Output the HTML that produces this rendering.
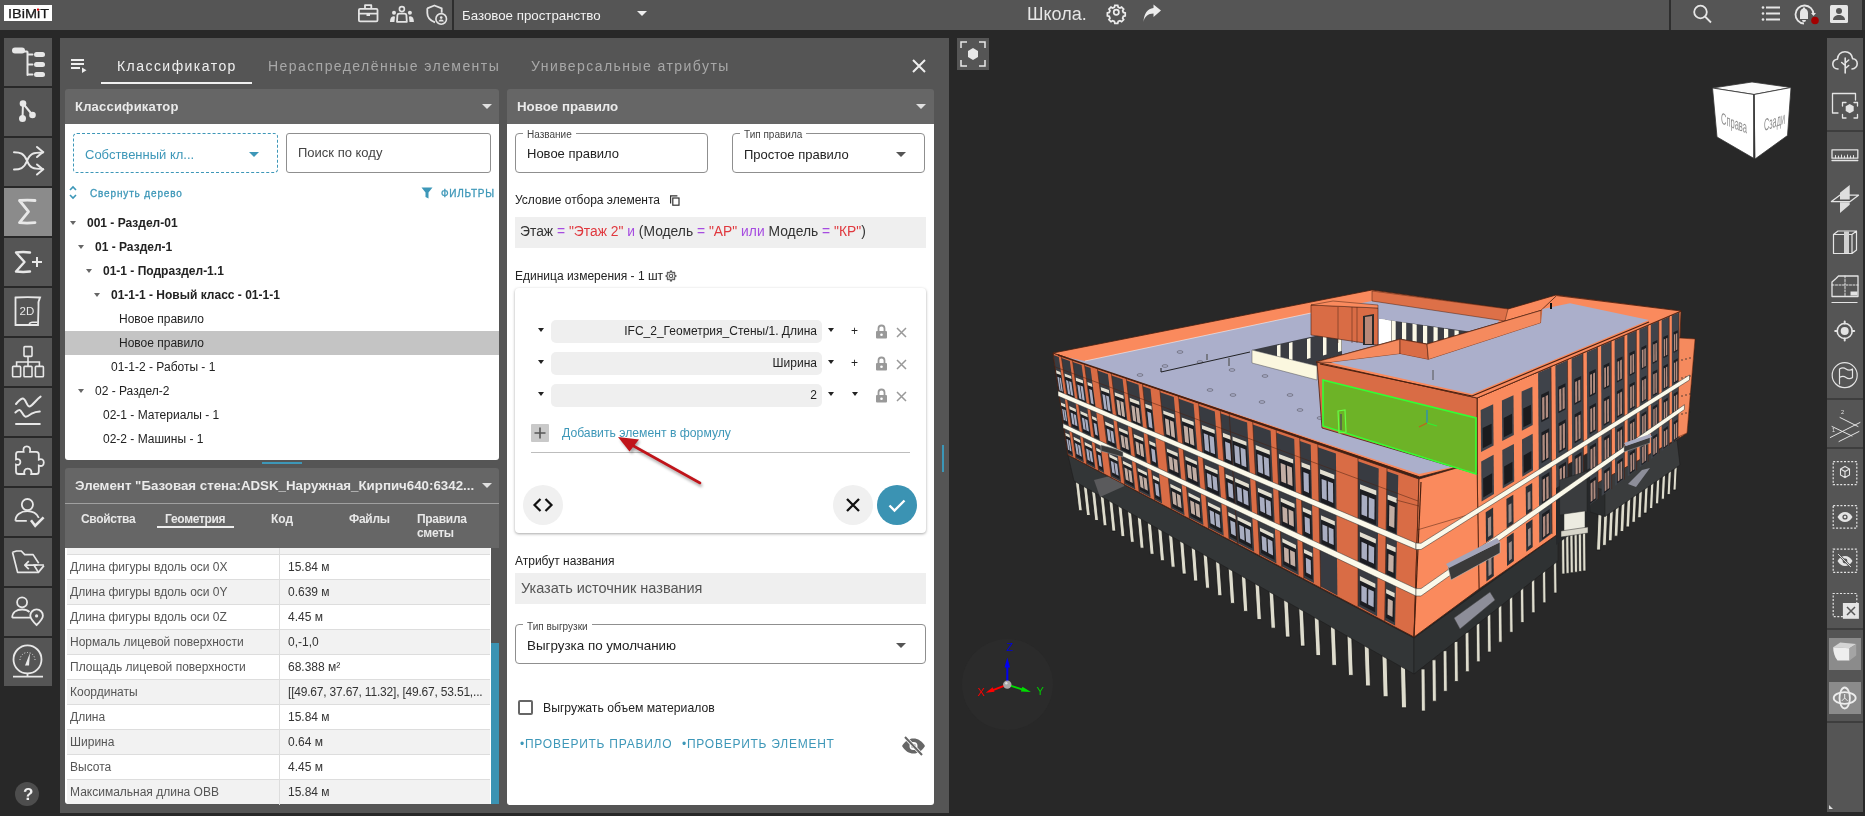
<!DOCTYPE html>
<html><head><meta charset="utf-8">
<style>
*{box-sizing:border-box;margin:0;padding:0}
html,body{width:1865px;height:816px;overflow:hidden;background:#282828;font-family:"Liberation Sans",sans-serif}
body{position:relative}
.t,.tr,.row span,.fr,svg{will-change:transform}
.a{position:absolute}
.t{position:absolute;white-space:nowrap;line-height:1}
.sb{position:absolute;left:4px;width:48px;height:48px;background:#555}
.sb.act{background:#8b8b8b}
.sb svg,.rb svg{position:absolute;left:0;top:0}
.tri{position:absolute;width:0;height:0;border-left:5px solid transparent;border-right:5px solid transparent;border-top:5px solid #e0e0e0}
.trid{position:absolute;width:0;height:0;border-left:5px solid transparent;border-right:5px solid transparent;border-top:5px solid #555}
.tt{position:absolute;width:0;height:0;border-left:3.5px solid transparent;border-right:3.5px solid transparent;border-top:4px solid #666}
.tr{position:absolute;font-size:12px;color:#222;white-space:nowrap;line-height:1}
.row{position:absolute;left:67px;width:422.5px;height:25px;border-top:1px solid #ddd;font-size:12px;color:#555}
.row span{position:absolute;top:6px;white-space:nowrap;line-height:1}
.row span.v{left:221px;color:#333}
.row span.k{left:3px}
.row i{position:absolute;left:212px;top:-1px;width:1px;height:26px;background:#ddd}
.g{background:#f2f2f2}
.fr{position:absolute;left:551px;width:271px;height:23px;background:#efefef;border-radius:5px;font-size:12px;color:#222;text-align:right;padding-right:5px;line-height:23px}
.blk{position:absolute;width:0;height:0;border-left:3.5px solid transparent;border-right:3.5px solid transparent;border-top:4px solid #222}
.rb{position:absolute;left:1829px;width:32px;height:32px}
</style></head><body>
<!-- TOP BAR -->
<div class="a" style="left:0;top:0;width:1865px;height:30px;background:#555"></div>
<div class="a" style="left:4px;top:5px;width:48px;height:16px;background:#fff"></div>
<svg class="a" style="left:4px;top:5px" width="48" height="16" viewBox="0 0 48 16"><text x="4" y="13.4" font-family="Liberation Sans" font-size="12.2" fill="#1a1a1a" textLength="41" lengthAdjust="spacingAndGlyphs" stroke="#1a1a1a" stroke-width="0.25">IBiMiT</text><rect x="33" y="3.6" width="2" height="2" fill="#e00000"/></svg>
<!-- top icons -->
<svg class="a" style="left:350px;top:0" width="110" height="30" viewBox="0 0 110 30">
 <g fill="none" stroke="#e4e4e4" stroke-width="1.8" stroke-linejoin="round">
  <rect x="8.9" y="8.8" width="18.6" height="12.6" rx="1.2"/>
  <path d="M15 8.8V5.2h6.3v3.6M8.9 13.7h18.6"/>
  <circle cx="51.9" cy="9.1" r="2.5" stroke-width="1.6"/>
  <path d="M47 21.8l.4-6.6c.1-1 1-1.6 2-1.6h5c1 0 1.9.6 2 1.6l.4 6.6z"/>
  <path d="M77.3 8.3l7.1-2.8 7.3 2.8v4.4M85 22.4c-4.5-1.8-7.7-5-7.7-9.5V8.3"/>
  <circle cx="91.2" cy="18.9" r="5.3" stroke-width="1.6"/>
 </g>
 <path d="M16.5 14v2h3.5v-2" fill="#e4e4e4"/>
 <g fill="#e4e4e4">
  <circle cx="44" cy="12.7" r="2"/><circle cx="59.9" cy="12.7" r="2"/>
  <path d="M40 22c0-3.5 1.2-5.8 3.5-5.8.8 0 1.4.3 1.5.6l-.6 5.2zM63.9 22c0-3.5-1.2-5.8-3.5-5.8-.8 0-1.4.3-1.5.6l.6 5.2z"/>
  <circle cx="91.2" cy="17.6" r="1.3"/><path d="M88.6 21.5c.3-1.4 1.3-2 2.6-2s2.3.6 2.6 2z"/>
 </g>
</svg>
<div class="a" style="left:452px;top:0;width:2px;height:30px;background:#2e2e2e"></div>
<div class="t" style="left:462px;top:9px;font-size:13.3px;color:#f2f2f2">Базовое пространство</div>
<div class="tri" style="left:637px;top:11px;border-left-width:5.5px;border-right-width:5.5px;border-top-width:5.5px;border-top-color:#eee"></div>
<div class="t" style="left:1027px;top:4.5px;font-size:18px;color:#e6e6e6">Школа.</div>
<svg class="a" style="left:1100px;top:0" width="70" height="30" viewBox="0 0 70 30">
 <g transform="translate(16.3 12.3) scale(0.72)">
  <path fill="none" stroke="#ececec" stroke-width="2.4" d="M-2 -9.5h4l.7 2.6 2.4 1 2.3-1.4 2.8 2.8-1.4 2.3 1 2.4 2.6.7v4l-2.6.7-1 2.4 1.4 2.3-2.8 2.8-2.3-1.4-2.4 1-.7 2.6h-4l-.7-2.6-2.4-1-2.3 1.4-2.8-2.8 1.4-2.3-1-2.4-2.6-.7v-4l2.6-.7 1-2.4-1.4-2.3 2.8-2.8 2.3 1.4 2.4-1z"/>
  <circle r="3.6" fill="none" stroke="#ececec" stroke-width="2.4"/>
 </g>
 <path fill="#ececec" d="M43.5 22c1-5.5 4.5-8.5 10-8.5V17l7.5-6.5-7.5-6v3.5C47.5 8.5 44 13.5 43.5 22z"/>
</svg>
<div class="a" style="left:1669px;top:0;width:2px;height:30px;background:#2e2e2e"></div>
<svg class="a" style="left:1690px;top:0" width="175" height="30" viewBox="0 0 175 30">
 <g fill="none" stroke="#e6e6e6" stroke-width="1.8">
  <circle cx="10.5" cy="12" r="6.3"/><path d="M15 16.5l6 6"/>
  <path d="M76 7.5h14M76 13.5h14M76 19.5h14"/>
  <path d="M114 23.5a9 9 0 1 1 9.5-9"/>
 </g>
 <g fill="#e6e6e6">
  <circle cx="73" cy="7.5" r="1.3"/><circle cx="73" cy="13.5" r="1.3"/><circle cx="73" cy="19.5" r="1.3"/>
  <path d="M110 19v-6c0-2.5 1.5-4 3-4.5v-1h2v1c1.5.5 3 2 3 4.5v6zM112 20h4a2 2 0 0 1-4 0z"/>
  <path d="M121 13h5l-2.5 3z"/>
  <rect x="140" y="5" width="18" height="18" rx="1.5"/>
 </g>
 <circle cx="125" cy="20.5" r="3.8" fill="#a30000"/>
 <g fill="#555"><circle cx="149" cy="11" r="3"/><path d="M143 20c0-3.5 3-5 6-5s6 1.5 6 5z"/></g>
</svg>
<div class="a" style="left:1862px;top:0;width:3px;height:30px;background:#2e2e2e"></div>

<!-- LEFT SIDEBAR -->
<div class="sb" style="top:38px"><svg width="48" height="48" viewBox="0 0 48 48"><g transform="translate(-4 0)"><g fill="none" stroke="#e8e8e8" stroke-width="2" stroke-linecap="round"><path d="M27.5 14v23M27.5 16.5h5M27.5 26.5h5M27.5 36.5h5"/></g><g fill="#e8e8e8"><rect x="12" y="9.5" width="13" height="6" rx="3"/><path d="M22 12.5h5.5v2H22z"/><rect x="34" y="14" width="11" height="5" rx="2.5"/><rect x="34" y="24" width="11" height="5" rx="2.5"/><rect x="34" y="34" width="11" height="5" rx="2.5"/></g></g></svg></div>
<div class="sb" style="top:88px"><svg width="48" height="48" viewBox="0 0 48 48"><g transform="translate(-4 0)"><path d="M23 15.5l-.5 15M23 15.5l9.5 11.5" stroke="#e8e8e8" stroke-width="2"/><g fill="#e8e8e8"><circle cx="23" cy="15.5" r="3.3"/><circle cx="22.5" cy="30.5" r="3.5"/><circle cx="32.5" cy="27" r="3.3"/></g></g></svg></div>
<div class="sb" style="top:138px"><svg width="48" height="48" viewBox="0 0 48 48"><g transform="translate(-4 0)"><g fill="none" stroke="#e8e8e8" stroke-width="2" stroke-linecap="round"><path d="M14 14.2c6 0 10 1 13 8.5s6 8.3 16 8.3"/><path d="M14 31.5c6 0 10-1 13-8.5s6-8.5 16-8.5"/><path d="M37 9l6 5-6 5M37 26.5l6 5-6 5"/></g></g></svg></div>
<div class="sb act" style="top:188px"><svg width="48" height="48" viewBox="0 0 48 48"><g transform="translate(-4 0)"><path d="M35 12.5c-5-.5-10-.5-15.5 0l9 11.2-9 11c5 .5 10 .5 15.5 0" fill="none" stroke="#e8e8e8" stroke-width="2.8" stroke-linecap="round" stroke-linejoin="round"/></g></svg></div>
<div class="sb" style="top:238px"><svg width="48" height="48" viewBox="0 0 48 48"><path d="M26 14.5c-4.5-.6-9-.6-14 0l8.5 9.5-8.5 9.5c5 .6 9.5.6 14 0" fill="none" stroke="#e8e8e8" stroke-width="2.4" stroke-linecap="round" stroke-linejoin="round"/><path d="M33 19v10M28 24h10" stroke="#e8e8e8" stroke-width="2"/></svg></div>
<div class="sb" style="top:288px"><svg width="48" height="48" viewBox="0 0 48 48"><path d="M11.5 9.5c8-.6 16-.6 24.5 0-1.5 3-2 6-1.5 9l-.5 18.5H11.5z" fill="none" stroke="#e8e8e8" stroke-width="1.8"/><path d="M25 36.5c.5-1.5 1.5-2.2 3-2.2h5.5" fill="none" stroke="#e8e8e8" stroke-width="1.6"/><text x="15.5" y="27.2" font-family="Liberation Sans" font-size="11.5" fill="#e8e8e8">2D</text></svg></div>
<div class="sb" style="top:338px"><svg width="48" height="48" viewBox="0 0 48 48"><g fill="none" stroke="#e8e8e8" stroke-width="1.6"><rect x="20" y="8.6" width="8" height="9.8" rx="0.8"/><rect x="8.6" y="28.4" width="8" height="10.4" rx="0.8"/><rect x="20" y="28.4" width="8" height="10.4" rx="0.8"/><rect x="31.4" y="28.4" width="8" height="10.4" rx="0.8"/><path d="M24 18.4v10M12.6 28.4V24h22.8v4.4"/></g></svg></div>
<div class="sb" style="top:388px"><svg width="48" height="48" viewBox="0 0 48 48"><g fill="none" stroke="#e8e8e8" stroke-width="2" stroke-linecap="round"><path d="M12 16c2.5-3 4.5-5 6.6-5.4 3-.5 4 7.5 6.6 7.8 3 .3 7-7 11.4-9.8"/><path d="M11.4 24.5c1.5-1.5 3-2.6 4.2-2.5 2 .2 3.5 6.5 6 6.7 2.2.2 4.5-2.2 6-3.1 2.5-1.3 5-2 8.2-2.1"/><path d="M12 35.9h23.8"/></g></svg></div>
<div class="sb" style="top:438px"><svg width="48" height="48" viewBox="0 0 48 48"><path d="M14 13.8h5.6c-.8-3.5.6-5.4 3.2-5.4s4 1.9 3.2 5.4h6.2c1.5 0 2.6 1.1 2.6 2.6v5.2c2.8-1 5-.2 5 3s-2.2 4-5 3v5.8c0 1.5-1.1 2.6-2.6 2.6h-5c.8-3-.4-5.4-3.4-5.4s-4.2 2.4-3.4 5.4H14.6c-1.5 0-2.6-1.1-2.6-2.6v-6.8c2.5.8 4.4-.2 4.4-2.6s-1.9-3.4-4.4-2.6v-5c0-1.5 1-2.6 2-2.6z" fill="none" stroke="#e8e8e8" stroke-width="1.8"/></svg></div>
<div class="sb" style="top:488px"><svg width="48" height="48" viewBox="0 0 48 48"><g fill="none" stroke="#e8e8e8" stroke-width="1.8"><circle cx="23.4" cy="16.6" r="5.6"/><path d="M11.4 32.8c0-6 5.5-9.6 12-9.6 5.5 0 9.5 2.5 11.4 6.6M11.4 32.8h11.4"/></g><path d="M27 32.3l4.2 5.4 8.4-8.4" fill="none" stroke="#e8e8e8" stroke-width="2.6"/></svg></div>
<div class="sb" style="top:538px"><svg width="48" height="48" viewBox="0 0 48 48"><g fill="none" stroke="#e8e8e8" stroke-width="1.7" stroke-linejoin="round"><path d="M8.5 14.2l4-1.2h4.8l3.4 3.6h8.4l5.6 8.6M8.5 14.2l5.1 20.2h20.8l5.5-6.8"/><path d="M33.5 27.2H21M24.8 23.2l-4 4 4 4"/><path d="M34.4 34.4l-4.5-7.4h10"/></g></svg></div>
<div class="sb" style="top:588px"><svg width="48" height="48" viewBox="0 0 48 48"><g fill="none" stroke="#e8e8e8" stroke-width="1.8"><circle cx="18.1" cy="14.3" r="5"/><path d="M8.2 29.7c0-5 4-8.2 10-8.2 3 0 5.5.8 7.3 2.5M8.2 29.7h18"/><path d="M32.6 37c-3.6-3.5-6.3-6.5-6.3-9.3a6.3 6.3 0 0 1 12.6 0c0 2.8-2.7 5.8-6.3 9.3z"/></g><circle cx="32.6" cy="27.9" r="1.6" fill="#e8e8e8"/></svg></div>
<div class="sb" style="top:638px"><svg width="48" height="48" viewBox="0 0 48 48"><g fill="none" stroke="#e8e8e8" stroke-width="1.8"><circle cx="23.5" cy="21.4" r="14"/><path d="M23.5 35.4v3.2M9 38.6h30"/></g><path d="M16 22a7.5 7.5 0 0 1 15 0" fill="none" stroke="#e8e8e8" stroke-width="1" stroke-dasharray="1 1.8"/><path d="M21 27.5l5-12.5-1 12.5z" fill="#e8e8e8"/></svg></div>
<div class="a" style="left:15px;top:782px;width:24px;height:24px;border-radius:50%;background:#4d4d4d"></div>
<div class="t" style="left:22.5px;top:785.5px;font-size:17px;font-weight:bold;color:#f0f0f0">?</div>


<!-- MAIN PANEL -->
<div class="a" style="left:60px;top:38px;width:889px;height:775px;background:#555"></div>
<!-- tab header -->
<svg class="a" style="left:68px;top:56px" width="22" height="20" viewBox="0 0 22 20">
 <path d="M3 4h13M3 8h13M3 12h9" stroke="#eee" stroke-width="1.8"/>
 <path d="M14 11.5v5.5l4.5-2.75z" fill="#eee"/>
</svg>
<div class="t" style="left:117px;top:59px;font-size:14px;color:#f0f0f0;letter-spacing:1.45px">Классификатор</div>
<div class="a" style="left:101px;top:82px;width:151px;height:2px;background:#f0f0f0"></div>
<div class="t" style="left:268px;top:59px;font-size:14px;color:#a8a8a8;letter-spacing:1.43px">Нераспределённые элементы</div>
<div class="t" style="left:531px;top:59px;font-size:14px;color:#a8a8a8;letter-spacing:1.44px">Универсальные атрибуты</div>
<svg class="a" style="left:910px;top:57px" width="18" height="18" viewBox="0 0 18 18"><path d="M3 3l12 12M15 3L3 15" stroke="#eee" stroke-width="2"/></svg>

<!-- CLASSIFIER PANEL -->
<div class="a" style="left:65px;top:89px;width:434px;height:35px;background:#666;border-radius:3px 3px 0 0"></div>
<div class="t" style="left:75px;top:100px;font-size:13px;font-weight:bold;color:#eaeaea;letter-spacing:0.2px">Классификатор</div>
<div class="tri" style="left:482px;top:104px"></div>
<div class="a" style="left:65px;top:124px;width:434px;height:336px;background:#fff;border-radius:0 0 3px 3px"></div>
<div class="a" style="left:73px;top:133px;width:205px;height:40px;border:1px dashed #3d97b8;border-radius:4px"></div>
<div class="t" style="left:85px;top:148px;font-size:13px;color:#3d97b8">Собственный кл...</div>
<div class="a" style="left:249px;top:152px;width:0;height:0;border-left:5px solid transparent;border-right:5px solid transparent;border-top:5px solid #3d97b8"></div>
<div class="a" style="left:286px;top:133px;width:205px;height:40px;border:1px solid #8f8f8f;border-radius:3px"></div>
<div class="t" style="left:298px;top:146px;font-size:13px;color:#444">Поиск по коду</div>
<svg class="a" style="left:66px;top:185px" width="14" height="16" viewBox="0 0 14 16"><path d="M4 5l3-3 3 3M4 10l3 3 3-3" fill="none" stroke="#3d97b8" stroke-width="1.6"/></svg>
<div class="t" style="left:90px;top:188.5px;font-size:10px;color:#3d97b8;letter-spacing:0.85px;-webkit-text-stroke:0.3px #3d97b8">Свернуть дерево</div>
<svg class="a" style="left:420px;top:186px" width="14" height="14" viewBox="0 0 14 14"><path d="M1.5 1.5h11l-4 5v6l-3-1.5v-4.5z" fill="#3d97b8"/></svg>
<div class="t" style="left:441px;top:188.5px;font-size:10px;color:#3d97b8;letter-spacing:0.75px;-webkit-text-stroke:0.3px #3d97b8">ФИЛЬТРЫ</div>
<!-- tree -->
<div class="a" style="left:65px;top:331px;width:434px;height:24px;background:#c4c4c4"></div>
<div class="tt" style="left:70px;top:221px"></div><div class="tr" style="left:87px;top:217px;font-weight:bold">001 - Раздел-01</div>
<div class="tt" style="left:78px;top:245px"></div><div class="tr" style="left:95px;top:241px;font-weight:bold">01 - Раздел-1</div>
<div class="tt" style="left:86px;top:269px"></div><div class="tr" style="left:103px;top:265px;font-weight:bold">01-1 - Подраздел-1.1</div>
<div class="tt" style="left:94px;top:293px"></div><div class="tr" style="left:111px;top:289px;font-weight:bold">01-1-1 - Новый класс - 01-1-1</div>
<div class="tr" style="left:119px;top:313px">Новое правило</div>
<div class="tr" style="left:119px;top:337px">Новое правило</div>
<div class="tr" style="left:111px;top:361px">01-1-2 - Работы - 1</div>
<div class="tt" style="left:78px;top:389px"></div><div class="tr" style="left:95px;top:385px">02 - Раздел-2</div>
<div class="tr" style="left:103px;top:409px">02-1 - Материалы - 1</div>
<div class="tr" style="left:103px;top:433px">02-2 - Машины - 1</div>
<div class="a" style="left:262px;top:462px;width:40px;height:2px;background:#3d97b8"></div>

<!-- ELEMENT PANEL -->
<div class="a" style="left:65px;top:468px;width:434px;height:80px;background:#666;border-radius:3px 3px 0 0"></div>
<div class="a" style="left:65px;top:503px;width:434px;height:1px;background:#a0a0a0"></div>
<div class="t" style="left:75px;top:479px;font-size:13.3px;font-weight:bold;color:#eaeaea">Элемент "Базовая стена:ADSK_Наружная_Кирпич640:6342...</div>
<div class="tri" style="left:482px;top:483px"></div>
<div class="t" style="left:81px;top:513px;font-size:12px;font-weight:bold;color:#e8e8e8;letter-spacing:-0.35px">Свойства</div>
<div class="t" style="left:165px;top:513px;font-size:12px;font-weight:bold;color:#e8e8e8;letter-spacing:-0.3px">Геометрия</div>
<div class="a" style="left:157px;top:526px;width:77px;height:2px;background:#eee"></div>
<div class="t" style="left:271px;top:513px;font-size:12px;font-weight:bold;color:#e8e8e8">Код</div>
<div class="t" style="left:349px;top:513px;font-size:12px;font-weight:bold;color:#e8e8e8;letter-spacing:-0.3px">Файлы</div>
<div class="t" style="left:417px;top:513px;font-size:12px;font-weight:bold;color:#e8e8e8;letter-spacing:-0.3px">Правила</div>
<div class="t" style="left:417px;top:527px;font-size:12px;font-weight:bold;color:#e8e8e8;letter-spacing:-0.3px">сметы</div>
<div class="a" style="left:65px;top:548px;width:434px;height:256px;background:#fff;overflow:hidden;border-radius:0 0 3px 3px">
</div>
<div class="row g" style="top:548px;height:7px;border-top:none"><i style="top:0;height:7px"></i></div>
<div class="row" style="top:554px"><span class="k">Длина фигуры вдоль оси 0X</span><i></i><span class="v">15.84 м</span></div>
<div class="row g" style="top:579px"><span class="k">Длина фигуры вдоль оси 0Y</span><i></i><span class="v">0.639 м</span></div>
<div class="row" style="top:604px"><span class="k">Длина фигуры вдоль оси 0Z</span><i></i><span class="v">4.45 м</span></div>
<div class="row g" style="top:629px"><span class="k">Нормаль лицевой поверхности</span><i></i><span class="v">0,-1,0</span></div>
<div class="row" style="top:654px"><span class="k">Площадь лицевой поверхности</span><i></i><span class="v">68.388 м²</span></div>
<div class="row g" style="top:679px"><span class="k">Координаты</span><i></i><span class="v" style="letter-spacing:-0.2px">[[49.67, 37.67, 11.32], [49.67, 53.51,...</span></div>
<div class="row" style="top:704px"><span class="k">Длина</span><i></i><span class="v">15.84 м</span></div>
<div class="row g" style="top:729px"><span class="k">Ширина</span><i></i><span class="v">0.64 м</span></div>
<div class="row" style="top:754px"><span class="k">Высота</span><i></i><span class="v">4.45 м</span></div>
<div class="row g" style="top:779px;height:25px"><span class="k">Максимальная длина OBB</span><i></i><span class="v">15.84 м</span></div>
<div class="a" style="left:491px;top:548px;width:8px;height:256px;background:#555"></div>
<div class="a" style="left:491px;top:643px;width:8px;height:161px;background:#3b93b3"></div>

<!-- MIDDLE PANEL -->
<div class="a" style="left:942px;top:445px;width:2px;height:27px;background:#3b97b8"></div>
<div class="a" style="left:507px;top:89px;width:427px;height:35px;background:#666;border-radius:3px 3px 0 0"></div>
<div class="t" style="left:517px;top:100px;font-size:13.3px;font-weight:bold;color:#eaeaea">Новое правило</div>
<div class="tri" style="left:916px;top:104px"></div>
<div class="a" style="left:507px;top:124px;width:427px;height:681px;background:#fff;border-radius:0 0 3px 3px"></div>
<!-- name field -->
<div class="a" style="left:515px;top:133px;width:193px;height:40px;border:1px solid #8f8f8f;border-radius:4px"></div>
<div class="t" style="left:523px;top:129.5px;font-size:10px;color:#444;background:#fff;padding:0 4px">Название</div>
<div class="t" style="left:527px;top:147px;font-size:13px;color:#222">Новое правило</div>
<!-- type -->
<div class="a" style="left:732px;top:133px;width:193px;height:40px;border:1px solid #8f8f8f;border-radius:4px"></div>
<div class="t" style="left:740px;top:129.5px;font-size:10px;color:#444;background:#fff;padding:0 4px">Тип правила</div>
<div class="t" style="left:744px;top:148px;font-size:13px;color:#222">Простое правило</div>
<div class="trid" style="left:896px;top:152px"></div>
<!-- condition -->
<div class="t" style="left:515px;top:194px;font-size:12px;color:#222">Условие отбора элемента</div>
<svg class="a" style="left:668px;top:193px" width="14" height="14" viewBox="0 0 14 14"><path d="M2.6 10.5V2.8h6.8" fill="none" stroke="#333" stroke-width="1.2"/><rect x="4.8" y="5" width="6.2" height="7.2" fill="none" stroke="#333" stroke-width="1.2"/></svg>
<div class="a" style="left:515px;top:217px;width:411px;height:31px;background:#efefef"></div>
<div class="t" style="left:520px;top:225px;font-size:13.85px;color:#333">Этаж <span style="color:#a64ce0">=</span> <span style="color:#e0383e">"Этаж 2"</span> <span style="color:#a64ce0">и</span> (Модель <span style="color:#a64ce0">=</span> <span style="color:#e0383e">"АР"</span> <span style="color:#a64ce0">или</span> Модель <span style="color:#a64ce0">=</span> <span style="color:#e0383e">"КР"</span>)</div>
<div class="t" style="left:515px;top:270px;font-size:12px;color:#222">Единица измерения - 1 шт</div>
<svg class="a" style="left:665px;top:270px" width="12" height="12" viewBox="0 0 12 12"><path d="M9.49 5.11 L10.86 5.41 L10.86 6.59 L9.49 6.89 L9.10 7.84 L9.85 9.03 L9.03 9.85 L7.84 9.10 L6.89 9.49 L6.59 10.86 L5.41 10.86 L5.11 9.49 L4.16 9.10 L2.97 9.85 L2.15 9.03 L2.90 7.84 L2.51 6.89 L1.14 6.59 L1.14 5.41 L2.51 5.11 L2.90 4.16 L2.15 2.97 L2.97 2.15 L4.16 2.90 L5.11 2.51 L5.41 1.14 L6.59 1.14 L6.89 2.51 L7.84 2.90 L9.03 2.15 L9.85 2.97 L9.10 4.16Z" fill="none" stroke="#555" stroke-width="1.1"/><circle cx="6" cy="6" r="1.7" fill="none" stroke="#555" stroke-width="1.1"/></svg>
<!-- formula card -->
<div class="a" style="left:515px;top:288px;width:411px;height:245px;background:#fff;border-radius:4px;box-shadow:0 1px 3px rgba(0,0,0,0.35)"></div>
<div class="blk" style="left:538px;top:328px"></div>
<div class="fr" style="top:320px">IFC_2_Геометрия_Стены/1. Длина</div>
<div class="blk" style="left:828px;top:328px"></div>
<div class="t" style="left:851px;top:325px;font-size:12px;color:#222">+</div>
<div class="blk" style="left:538px;top:360px"></div>
<div class="fr" style="top:352px">Ширина</div>
<div class="blk" style="left:828px;top:360px"></div>
<div class="t" style="left:851px;top:357px;font-size:12px;color:#222">+</div>
<div class="blk" style="left:538px;top:392px"></div>
<div class="fr" style="top:384px">2</div>
<div class="blk" style="left:828px;top:392px"></div>
<div class="blk" style="left:852px;top:392px"></div>
<svg class="a" style="left:870px;top:320px" width="45" height="90" viewBox="0 0 45 90">
 <g id="lk"><path d="M8.5 11V8.5a3 3 0 0 1 6 0V11" fill="none" stroke="#999" stroke-width="1.8"/><rect x="6" y="11" width="11" height="7.5" rx="1" fill="#999"/><circle cx="11.5" cy="14.7" r="1.3" fill="#fff"/>
 <path d="M27 8l9 9M36 8l-9 9" stroke="#999" stroke-width="1.5"/></g>
 <use href="#lk" y="32"/><use href="#lk" y="64"/>
</svg>
<div class="a" style="left:531px;top:424px;width:18px;height:18px;background:#c9c9c9;border-radius:1px"></div>
<svg class="a" style="left:531px;top:424px" width="18" height="18" viewBox="0 0 18 18"><path d="M9 3.5v11M3.5 9h11" stroke="#555" stroke-width="1.6"/></svg>
<div class="t" style="left:562px;top:427px;font-size:12.2px;color:#3d97b8">Добавить элемент в формулу</div>
<div class="a" style="left:531px;top:452px;width:379px;height:1px;background:#bdbdbd"></div>
<div class="a" style="left:523px;top:485px;width:40px;height:40px;border-radius:50%;background:#f0f0f0"></div>
<svg class="a" style="left:523px;top:485px" width="40" height="40" viewBox="0 0 40 40"><path d="M17.5 14l-6 6 6 6M22.5 14l6 6-6 6" fill="none" stroke="#111" stroke-width="2.2"/></svg>
<div class="a" style="left:833px;top:485px;width:40px;height:40px;border-radius:50%;background:#f0f0f0"></div>
<svg class="a" style="left:833px;top:485px" width="40" height="40" viewBox="0 0 40 40"><path d="M14 14l12 12M26 14l-12 12" stroke="#111" stroke-width="2.3"/></svg>
<div class="a" style="left:877px;top:485px;width:40px;height:40px;border-radius:50%;background:#3b93b3"></div>
<svg class="a" style="left:877px;top:485px" width="40" height="40" viewBox="0 0 40 40"><path d="M12.5 20.5l5 5 10-10" fill="none" stroke="#fff" stroke-width="2.4"/></svg>
<!-- arrow -->
<svg class="a" style="left:600px;top:425px" width="120" height="75" viewBox="0 0 120 75">
 <defs><filter id="sh" x="-20%" y="-20%" width="140%" height="140%"><feGaussianBlur stdDeviation="1.5"/></filter></defs>
 <g transform="translate(2 3)" opacity="0.35" filter="url(#sh)"><path d="M100 58L32 20" stroke="#000" stroke-width="3"/><path d="M18 12l20 1-8 13z" fill="#000"/></g>
 <path d="M100 58L30 19" stroke="#c0141a" stroke-width="2.6" stroke-linecap="round"/>
 <path d="M18 12l21 2.5-9.5 12z" fill="#c0141a"/>
</svg>
<!-- attribute -->
<div class="t" style="left:515px;top:555px;font-size:12px;color:#222">Атрибут названия</div>
<div class="a" style="left:515px;top:573px;width:411px;height:31px;background:#efefef"></div>
<div class="t" style="left:521px;top:581px;font-size:14.5px;color:#555">Указать источник названия</div>
<div class="a" style="left:515px;top:624px;width:411px;height:40px;border:1px solid #8f8f8f;border-radius:4px"></div>
<div class="t" style="left:523px;top:621.5px;font-size:10px;color:#444;background:#fff;padding:0 4px">Тип выгрузки</div>
<div class="t" style="left:527px;top:639px;font-size:13.4px;color:#222">Выгрузка по умолчанию</div>
<div class="trid" style="left:896px;top:643px"></div>
<div class="a" style="left:518px;top:700px;width:15px;height:15px;border:2px solid #666;border-radius:2px"></div>
<div class="t" style="left:543px;top:702px;font-size:12.2px;color:#222">Выгружать объем материалов</div>
<div class="t" style="left:520px;top:738px;font-size:12px;color:#3d97b8;letter-spacing:0.75px">•ПРОВЕРИТЬ ПРАВИЛО</div>
<div class="t" style="left:682px;top:738px;font-size:12px;color:#3d97b8;letter-spacing:0.75px">•ПРОВЕРИТЬ ЭЛЕМЕНТ</div>
<svg class="a" style="left:900px;top:734px" width="27" height="24" viewBox="0 0 27 24">
 <path d="M2 12c3-5 7-7.5 11.5-7.5S22 7 25 12c-3 5-7 7.5-11.5 7.5S5 17 2 12z" fill="#666"/>
 <circle cx="13.5" cy="12" r="4" fill="#fff"/><circle cx="13.5" cy="12" r="2.3" fill="#666"/>
 <path d="M5 3l17 18" stroke="#fff" stroke-width="3.5"/><path d="M5 3l17 18" stroke="#666" stroke-width="2"/>
</svg>


<!-- VIEWER -->
<div class="a" style="left:957px;top:38px;width:32px;height:32px;background:#555"></div>
<svg class="a" style="left:957px;top:38px" width="32" height="32" viewBox="0 0 32 32"><path d="M4 10V4h6M22 4h6v6M28 22v6h-6M10 28H4v-6" fill="none" stroke="#e8e8e8" stroke-width="1.5"/><path d="M16 10l5 3v6l-5 3-5-3v-6z" fill="#e8e8e8"/></svg>
<div class="a" style="left:961.5px;top:638.8px;width:91.6px;height:91.6px;border-radius:50%;background:#2b2b2b"></div>
<svg class="a" style="left:960px;top:638px" width="95" height="95" viewBox="0 0 95 95">
 <path d="M47.3 46.6V26" stroke="#0000f0" stroke-width="2"/><path d="M44.5 29.5l2.8-9.9 2.8 9.9z" fill="#0000f0"/>
 <text x="46.2" y="13.2" font-family="Liberation Sans" font-size="11" fill="#0000e0">Z</text>
 <path d="M47.3 46.6l-15 5.8" stroke="#f00" stroke-width="2"/><path d="M25.7 54.7l7-5.5 1.8 4.5z" fill="#f00"/>
 <text x="17.5" y="58" font-family="Liberation Sans" font-size="11" fill="#f00">X</text>
 <path d="M47.3 46.6l15.5 5" stroke="#0d0" stroke-width="2"/><path d="M70.9 54l-8.5-5.2-1.5 4.6z" fill="#0d0"/>
 <text x="76.5" y="56.5" font-family="Liberation Sans" font-size="11" fill="#0c0">Y</text>
 <circle cx="47.3" cy="46.6" r="4.2" fill="#a8a8a8"/><circle cx="46.3" cy="45.3" r="1.2" fill="#ddd"/>
</svg>
<!-- nav cube -->
<svg class="a" style="left:1700px;top:70px" width="110" height="100" viewBox="0 0 110 100">
 <path d="M12.5 18L52 12l39 5.5-37 7z" fill="#fafafa" stroke="#333" stroke-width="0.8"/>
 <path d="M12.5 18L54 24.5v64L17 67z" fill="#fff" stroke="#333" stroke-width="0.8"/>
 <path d="M54 24.5L91 17.5l-3.5 48L55 89z" fill="#fff" stroke="#333" stroke-width="0.8"/>
 <path d="M54 24.5V89" stroke="#333" stroke-width="1.4"/>
 <text x="0" y="0" font-family="Liberation Sans" font-size="16" fill="#8c8c8c" transform="matrix(0.47 0.18 0 1 21 53.5)">Справа</text>
 <text x="0" y="0" font-family="Liberation Sans" font-size="17" fill="#8c8c8c" transform="matrix(0.43 -0.15 0 1 64 61)">Сзади</text>
</svg>
<!--BLD--><svg class="a" style="left:0;top:0" width="1865" height="816" viewBox="0 0 1865 816"><polygon points="1075.2,479.7 1078.8,479.7 1082.3,510.7 1078.7,510.7" fill="#dedccd" stroke="#161616" stroke-width="0.8"/><polygon points="1083.2,484.3 1086.8,484.3 1090.3,515.5 1086.6,515.5" fill="#dedccd" stroke="#161616" stroke-width="0.8"/><polygon points="1091.4,489.0 1095.1,489.0 1098.5,520.5 1094.8,520.5" fill="#dedccd" stroke="#161616" stroke-width="0.8"/><polygon points="1100.0,493.8 1103.7,493.8 1107.0,525.7 1103.3,525.7" fill="#dedccd" stroke="#161616" stroke-width="0.8"/><polygon points="1108.8,498.9 1112.5,498.9 1115.8,531.1 1112.0,531.1" fill="#dedccd" stroke="#161616" stroke-width="0.8"/><polygon points="1117.9,504.1 1121.7,504.1 1124.9,536.6 1121.1,536.6" fill="#dedccd" stroke="#161616" stroke-width="0.8"/><polygon points="1127.4,509.4 1131.2,509.4 1134.3,542.3 1130.5,542.3" fill="#dedccd" stroke="#161616" stroke-width="0.8"/><polygon points="1137.1,515.0 1141.0,515.0 1144.0,548.2 1140.2,548.2" fill="#dedccd" stroke="#161616" stroke-width="0.8"/><polygon points="1147.2,520.8 1151.1,520.8 1154.1,554.3 1150.2,554.3" fill="#dedccd" stroke="#161616" stroke-width="0.8"/><polygon points="1157.6,526.7 1161.6,526.7 1164.5,560.7 1160.5,560.7" fill="#dedccd" stroke="#161616" stroke-width="0.8"/><polygon points="1168.4,532.9 1172.4,532.9 1175.2,567.2 1171.2,567.2" fill="#dedccd" stroke="#161616" stroke-width="0.8"/><polygon points="1179.6,539.2 1183.6,539.2 1186.3,574.0 1182.3,574.0" fill="#dedccd" stroke="#161616" stroke-width="0.8"/><polygon points="1191.1,545.8 1195.2,545.8 1197.8,581.0 1193.7,581.0" fill="#dedccd" stroke="#161616" stroke-width="0.8"/><polygon points="1203.0,552.6 1207.2,552.6 1209.7,588.2 1205.6,588.2" fill="#dedccd" stroke="#161616" stroke-width="0.8"/><polygon points="1215.4,559.6 1219.5,559.6 1222.0,595.7 1217.8,595.7" fill="#dedccd" stroke="#161616" stroke-width="0.8"/><polygon points="1228.1,566.9 1232.4,566.9 1234.7,603.4 1230.5,603.4" fill="#dedccd" stroke="#161616" stroke-width="0.8"/><polygon points="1241.3,574.4 1245.6,574.4 1247.8,611.4 1243.6,611.4" fill="#dedccd" stroke="#161616" stroke-width="0.8"/><polygon points="1254.9,582.2 1259.3,582.2 1261.4,619.6 1257.1,619.6" fill="#dedccd" stroke="#161616" stroke-width="0.8"/><polygon points="1269.0,590.2 1273.4,590.2 1275.5,628.2 1271.1,628.2" fill="#dedccd" stroke="#161616" stroke-width="0.8"/><polygon points="1283.6,598.5 1288.1,598.5 1290.0,637.0 1285.5,637.0" fill="#dedccd" stroke="#161616" stroke-width="0.8"/><polygon points="1298.7,607.1 1303.2,607.1 1305.0,646.1 1300.5,646.1" fill="#dedccd" stroke="#161616" stroke-width="0.8"/><polygon points="1314.2,616.0 1318.8,616.0 1320.6,655.6 1316.0,655.6" fill="#dedccd" stroke="#161616" stroke-width="0.8"/><polygon points="1330.4,625.2 1335.0,625.2 1336.6,665.4 1331.9,665.4" fill="#dedccd" stroke="#161616" stroke-width="0.8"/><polygon points="1347.0,634.7 1351.7,634.7 1353.2,675.4 1348.5,675.4" fill="#dedccd" stroke="#161616" stroke-width="0.8"/><polygon points="1364.2,644.5 1369.0,644.5 1370.4,685.9 1365.6,685.9" fill="#dedccd" stroke="#161616" stroke-width="0.8"/><polygon points="1382.0,654.7 1386.9,654.7 1388.1,696.7 1383.2,696.7" fill="#dedccd" stroke="#161616" stroke-width="0.8"/><polygon points="1400.5,665.2 1405.4,665.2 1406.5,707.8 1401.5,707.8" fill="#dedccd" stroke="#161616" stroke-width="0.8"/><polygon points="1421.1,669.0 1424.9,669.0 1425.3,711.0 1421.5,711.0" fill="#dedccd" stroke="#1c1c1c" stroke-width="0.7"/><polygon points="1432.1,659.8 1435.9,659.8 1436.3,701.2 1432.5,701.2" fill="#dedccd" stroke="#1c1c1c" stroke-width="0.7"/><polygon points="1443.2,650.7 1446.8,650.7 1447.2,691.3 1443.6,691.3" fill="#dedccd" stroke="#1c1c1c" stroke-width="0.7"/><polygon points="1454.2,641.5 1457.8,641.5 1458.2,681.5 1454.6,681.5" fill="#dedccd" stroke="#1c1c1c" stroke-width="0.7"/><polygon points="1465.2,632.3 1468.8,632.3 1469.2,671.7 1465.6,671.7" fill="#dedccd" stroke="#1c1c1c" stroke-width="0.7"/><polygon points="1476.3,623.2 1479.7,623.2 1480.1,661.8 1476.7,661.8" fill="#dedccd" stroke="#1c1c1c" stroke-width="0.7"/><polygon points="1487.3,614.0 1490.7,614.0 1491.1,652.0 1487.7,652.0" fill="#dedccd" stroke="#1c1c1c" stroke-width="0.7"/><polygon points="1498.3,604.8 1501.7,604.8 1502.1,642.2 1498.7,642.2" fill="#dedccd" stroke="#1c1c1c" stroke-width="0.7"/><polygon points="1509.4,595.7 1512.6,595.7 1513.0,632.3 1509.8,632.3" fill="#dedccd" stroke="#1c1c1c" stroke-width="0.7"/><polygon points="1520.4,586.5 1523.6,586.5 1524.0,622.5 1520.8,622.5" fill="#dedccd" stroke="#1c1c1c" stroke-width="0.7"/><polygon points="1531.4,577.3 1534.6,577.3 1535.0,612.7 1531.8,612.7" fill="#dedccd" stroke="#1c1c1c" stroke-width="0.7"/><polygon points="1542.5,568.2 1545.5,568.2 1545.9,602.8 1542.9,602.8" fill="#dedccd" stroke="#1c1c1c" stroke-width="0.7"/><polygon points="1553.5,559.0 1556.5,559.0 1556.9,593.0 1553.9,593.0" fill="#dedccd" stroke="#1c1c1c" stroke-width="0.7"/><polygon points="1561.5,534.0 1564.5,534.0 1564.9,574.0 1561.9,574.0" fill="#dedccd" stroke="#1c1c1c" stroke-width="0.7"/><polygon points="1565.7,533.4 1568.7,533.4 1569.1,573.4 1566.1,573.4" fill="#dedccd" stroke="#1c1c1c" stroke-width="0.7"/><polygon points="1569.9,532.8 1572.9,532.8 1573.3,572.8 1570.3,572.8" fill="#dedccd" stroke="#1c1c1c" stroke-width="0.7"/><polygon points="1574.1,532.2 1577.1,532.2 1577.5,572.2 1574.5,572.2" fill="#dedccd" stroke="#1c1c1c" stroke-width="0.7"/><polygon points="1578.3,531.6 1581.3,531.6 1581.7,571.6 1578.7,571.6" fill="#dedccd" stroke="#1c1c1c" stroke-width="0.7"/><polygon points="1582.5,531.0 1585.5,531.0 1585.9,571.0 1582.9,571.0" fill="#dedccd" stroke="#1c1c1c" stroke-width="0.7"/><polygon points="1598.1,514.0 1601.9,514.0 1600.4,550.0 1596.6,550.0" fill="#dedccd" stroke="#161616" stroke-width="0.8"/><polygon points="1604.0,509.8 1607.7,509.8 1606.2,545.4 1602.5,545.4" fill="#dedccd" stroke="#161616" stroke-width="0.8"/><polygon points="1609.9,505.7 1613.5,505.7 1612.0,540.8 1608.4,540.8" fill="#dedccd" stroke="#161616" stroke-width="0.8"/><polygon points="1615.7,501.5 1619.3,501.5 1617.8,536.2 1614.2,536.2" fill="#dedccd" stroke="#161616" stroke-width="0.8"/><polygon points="1621.6,497.4 1625.2,497.4 1623.7,531.5 1620.1,531.5" fill="#dedccd" stroke="#161616" stroke-width="0.8"/><polygon points="1627.5,493.2 1631.0,493.2 1629.5,526.9 1626.0,526.9" fill="#dedccd" stroke="#161616" stroke-width="0.8"/><polygon points="1633.4,489.1 1636.8,489.1 1635.3,522.3 1631.9,522.3" fill="#dedccd" stroke="#161616" stroke-width="0.8"/><polygon points="1639.2,484.9 1642.6,484.9 1641.1,517.7 1637.7,517.7" fill="#dedccd" stroke="#161616" stroke-width="0.8"/><polygon points="1645.1,480.8 1648.4,480.8 1646.9,513.1 1643.6,513.1" fill="#dedccd" stroke="#161616" stroke-width="0.8"/><polygon points="1651.0,476.6 1654.2,476.6 1652.7,508.5 1649.5,508.5" fill="#dedccd" stroke="#161616" stroke-width="0.8"/><polygon points="1656.9,472.5 1660.1,472.5 1658.6,503.8 1655.4,503.8" fill="#dedccd" stroke="#161616" stroke-width="0.8"/><polygon points="1662.7,468.3 1665.9,468.3 1664.4,499.2 1661.2,499.2" fill="#dedccd" stroke="#161616" stroke-width="0.8"/><polygon points="1668.6,464.2 1671.7,464.2 1670.2,494.6 1667.1,494.6" fill="#dedccd" stroke="#161616" stroke-width="0.8"/><polygon points="1674.5,460.0 1677.5,460.0 1676.0,490.0 1673.0,490.0" fill="#dedccd" stroke="#161616" stroke-width="0.8"/><polygon points="1068.0,455.0 1414.0,638.0 1414.0,674.0 1074.0,481.0" fill="#333637" stroke="#1e1e1e" stroke-width="0.6"/><polygon points="1414.0,638.0 1558.0,534.0 1558.0,561.0 1414.0,674.0" fill="#2f3233" stroke="#1e1e1e" stroke-width="0.6"/><polygon points="1588.0,486.0 1677.0,440.0 1680.0,465.0 1605.0,516.5" fill="#3a3c3d" stroke="#1e1e1e" stroke-width="0.6"/><polygon points="1588.0,486.0 1605.0,490.0 1605.0,516.5 1590.0,512.0" fill="#2a2c2d" stroke="#1e1e1e" stroke-width="0.5"/><polygon points="1094.0,480.0 1118.0,474.0 1124.5,486.0 1100.0,497.0" fill="#5a5a5c"/><polygon points="1053.0,353.0 1419.0,479.0 1414.0,637.0 1068.0,455.0" fill="#d96c45" stroke="#4a2010" stroke-width="0.8"/><polygon points="1053.3,355.1 1058.8,357.1 1073.2,456.8 1067.9,454.0" fill="#383b41"/><polyline points="1053.0,353.0 1068.0,455.0" stroke="#4a2010" stroke-width="0.6" fill="none"/><polygon points="1056.0,370.2 1060.4,371.9 1063.8,395.0 1059.4,393.2" fill="#1c1d21"/><polygon points="1056.0,370.2 1060.4,371.9 1060.9,375.1 1056.5,373.4" fill="#e2ded0"/><polygon points="1057.4,376.7 1058.9,377.3 1060.9,390.9 1059.4,390.3" fill="#a9aec2"/><polygon points="1059.4,377.5 1060.9,378.1 1062.9,391.7 1061.4,391.1" fill="#a9aec2"/><polygon points="1060.8,402.5 1065.1,404.3 1068.1,424.7 1063.8,422.7" fill="#1c1d21"/><polygon points="1060.8,402.5 1065.1,404.3 1065.6,407.4 1061.2,405.5" fill="#e2ded0"/><polygon points="1062.1,408.8 1063.6,409.4 1065.2,420.6 1063.7,419.9" fill="#a9aec2"/><polygon points="1064.1,409.6 1065.6,410.3 1067.2,421.5 1065.7,420.8" fill="#a9aec2"/><polygon points="1065.2,432.7 1069.5,434.8 1072.4,454.6 1068.1,452.4" fill="#1c1d21"/><polygon points="1065.2,432.7 1069.5,434.8 1070.0,437.8 1065.7,435.7" fill="#e2ded0"/><polygon points="1066.5,438.9 1068.0,439.6 1069.6,450.4 1068.1,449.7" fill="#a9aec2"/><polygon points="1068.5,439.8 1070.0,440.6 1071.5,451.4 1070.0,450.7" fill="#a9aec2"/><polygon points="1061.5,358.0 1069.8,360.9 1083.9,462.5 1075.9,458.2" fill="#383b41"/><polyline points="1061.2,355.8 1076.0,459.2" stroke="#4a2010" stroke-width="0.6" fill="none"/><polygon points="1064.5,373.4 1071.1,375.9 1074.4,399.4 1067.8,396.7" fill="#1c1d21"/><polygon points="1064.5,373.4 1071.1,375.9 1071.5,379.1 1064.9,376.6" fill="#e2ded0"/><polygon points="1066.0,380.1 1068.3,380.9 1070.3,394.8 1068.0,393.8" fill="#a9aec2"/><polygon points="1069.0,381.2 1071.3,382.1 1073.3,396.0 1070.9,395.0" fill="#a9aec2"/><polygon points="1069.2,406.1 1075.7,408.9 1078.6,429.7 1072.1,426.6" fill="#1c1d21"/><polygon points="1069.2,406.1 1075.7,408.9 1076.1,412.1 1069.6,409.2" fill="#e2ded0"/><polygon points="1070.7,412.6 1073.0,413.6 1074.6,424.9 1072.3,423.9" fill="#a9aec2"/><polygon points="1073.6,413.9 1075.9,414.9 1077.5,426.3 1075.2,425.2" fill="#a9aec2"/><polygon points="1073.5,436.7 1080.0,439.9 1082.8,460.0 1076.4,456.7" fill="#1c1d21"/><polygon points="1073.5,436.7 1080.0,439.9 1080.5,443.0 1074.0,439.8" fill="#e2ded0"/><polygon points="1075.0,443.1 1077.3,444.2 1078.8,455.2 1076.6,454.0" fill="#a9aec2"/><polygon points="1077.9,444.5 1080.2,445.7 1081.8,456.7 1079.5,455.5" fill="#a9aec2"/><polygon points="1072.7,361.9 1081.6,365.0 1095.4,468.5 1086.8,464.0" fill="#383b41"/><polyline points="1072.4,359.7 1086.9,464.9" stroke="#4a2010" stroke-width="0.6" fill="none"/><polygon points="1075.7,377.6 1082.8,380.3 1086.0,404.3 1078.9,401.3" fill="#1c1d21"/><polygon points="1075.7,377.6 1082.8,380.3 1083.2,383.6 1076.1,380.9" fill="#e2ded0"/><polygon points="1077.3,384.4 1079.7,385.4 1081.7,399.4 1079.2,398.4" fill="#a9aec2"/><polygon points="1080.4,385.6 1082.9,386.6 1084.8,400.7 1082.4,399.7" fill="#a9aec2"/><polygon points="1080.3,410.9 1087.3,413.9 1090.1,435.1 1083.1,431.8" fill="#1c1d21"/><polygon points="1080.3,410.9 1087.3,413.9 1087.7,417.2 1080.7,414.1" fill="#e2ded0"/><polygon points="1081.8,417.5 1084.3,418.6 1085.8,430.2 1083.4,429.0" fill="#a9aec2"/><polygon points="1085.0,418.9 1087.4,420.0 1089.0,431.6 1086.5,430.5" fill="#a9aec2"/><polygon points="1084.6,442.1 1091.5,445.5 1094.3,466.0 1087.4,462.4" fill="#1c1d21"/><polygon points="1084.6,442.1 1091.5,445.5 1092.0,448.6 1085.0,445.2" fill="#e2ded0"/><polygon points="1086.1,448.6 1088.5,449.8 1090.0,461.0 1087.6,459.7" fill="#a9aec2"/><polygon points="1089.2,450.1 1091.7,451.4 1093.2,462.6 1090.7,461.3" fill="#a9aec2"/><polygon points="1084.7,366.1 1090.5,368.1 1104.2,473.1 1098.5,470.1" fill="#383b41"/><polyline points="1084.4,363.8 1098.6,471.1" stroke="#4a2010" stroke-width="0.6" fill="none"/><polygon points="1087.4,382.0 1092.0,383.7 1095.2,408.1 1090.6,406.2" fill="#1c1d21"/><polygon points="1087.4,382.0 1092.0,383.7 1092.4,387.1 1087.8,385.3" fill="#e2ded0"/><polygon points="1089.2,389.0 1091.9,390.1 1093.8,404.4 1091.0,403.3" fill="#a9aec2"/><polygon points="1091.8,415.9 1096.4,417.9 1099.2,439.4 1094.7,437.2" fill="#1c1d21"/><polygon points="1091.8,415.9 1096.4,417.9 1096.9,421.2 1092.3,419.1" fill="#e2ded0"/><polygon points="1093.6,422.8 1096.4,424.0 1097.9,435.8 1095.2,434.5" fill="#a9aec2"/><polygon points="1096.1,447.7 1100.6,449.9 1103.3,470.7 1098.8,468.3" fill="#1c1d21"/><polygon points="1096.1,447.7 1100.6,449.9 1101.0,453.1 1096.5,450.8" fill="#e2ded0"/><polygon points="1097.8,454.4 1100.5,455.8 1102.0,467.1 1099.3,465.7" fill="#a9aec2"/><polygon points="1097.6,370.6 1107.9,374.2 1121.1,481.9 1111.1,476.7" fill="#383b41"/><polyline points="1097.3,368.3 1111.2,477.7" stroke="#4a2010" stroke-width="0.6" fill="none"/><polygon points="1100.7,387.0 1108.9,390.1 1111.9,415.1 1103.8,411.7" fill="#1c1d21"/><polygon points="1100.7,387.0 1108.9,390.1 1109.3,393.5 1101.1,390.4" fill="#e2ded0"/><polygon points="1102.3,394.1 1105.2,395.2 1107.0,409.9 1104.2,408.7" fill="#a9aec2"/><polygon points="1106.0,395.5 1108.9,396.6 1110.7,411.4 1107.8,410.2" fill="#a9aec2"/><polygon points="1105.0,421.6 1113.2,425.2 1115.9,447.2 1107.8,443.4" fill="#1c1d21"/><polygon points="1105.0,421.6 1113.2,425.2 1113.6,428.5 1105.5,424.9" fill="#e2ded0"/><polygon points="1106.7,428.6 1109.5,429.8 1111.0,441.8 1108.2,440.5" fill="#a9aec2"/><polygon points="1110.3,430.2 1113.2,431.4 1114.6,443.5 1111.8,442.2" fill="#a9aec2"/><polygon points="1109.1,454.1 1117.2,458.0 1119.8,479.3 1111.8,475.1" fill="#1c1d21"/><polygon points="1109.1,454.1 1117.2,458.0 1117.6,461.2 1109.5,457.3" fill="#e2ded0"/><polygon points="1110.7,460.8 1113.5,462.2 1115.0,473.8 1112.2,472.4" fill="#a9aec2"/><polygon points="1114.3,462.6 1117.2,464.0 1118.6,475.7 1115.8,474.3" fill="#a9aec2"/><polygon points="1111.6,375.4 1122.6,379.3 1135.3,489.4 1124.6,483.8" fill="#383b41"/><polyline points="1111.3,373.1 1124.7,484.8" stroke="#4a2010" stroke-width="0.6" fill="none"/><polygon points="1114.6,392.2 1123.4,395.5 1126.4,421.1 1117.6,417.5" fill="#1c1d21"/><polygon points="1114.6,392.2 1123.4,395.5 1123.8,399.1 1115.0,395.7" fill="#e2ded0"/><polygon points="1116.3,399.5 1119.4,400.7 1121.1,415.7 1118.1,414.4" fill="#c2aea4"/><polygon points="1120.3,401.0 1123.4,402.2 1125.1,417.3 1122.0,416.0" fill="#c2aea4"/><polygon points="1118.8,427.6 1127.6,431.4 1130.2,453.9 1121.5,449.8" fill="#1c1d21"/><polygon points="1118.8,427.6 1127.6,431.4 1128.0,434.8 1119.2,431.0" fill="#e2ded0"/><polygon points="1120.5,434.7 1123.5,436.1 1125.0,448.3 1122.0,446.9" fill="#c2aea4"/><polygon points="1124.4,436.4 1127.5,437.8 1128.9,450.1 1125.8,448.7" fill="#c2aea4"/><polygon points="1122.8,460.7 1131.4,464.9 1134.0,486.7 1125.4,482.2" fill="#1c1d21"/><polygon points="1122.8,460.7 1131.4,464.9 1131.8,468.2 1123.2,464.0" fill="#e2ded0"/><polygon points="1124.4,467.6 1127.4,469.1 1128.8,481.0 1125.8,479.4" fill="#c2aea4"/><polygon points="1128.3,469.6 1131.3,471.1 1132.7,483.0 1129.7,481.4" fill="#c2aea4"/><polygon points="1126.5,380.6 1138.5,384.8 1150.6,497.4 1139.1,491.4" fill="#383b41"/><polyline points="1126.3,378.2 1139.2,492.4" stroke="#4a2010" stroke-width="0.6" fill="none"/><polygon points="1129.6,397.8 1139.1,401.4 1141.9,427.6 1132.5,423.7" fill="#1c1d21"/><polygon points="1129.6,397.8 1139.1,401.4 1139.5,405.0 1130.0,401.4" fill="#e2ded0"/><polygon points="1131.3,405.3 1134.6,406.6 1136.3,421.9 1133.0,420.6" fill="#c2aea4"/><polygon points="1135.6,406.9 1138.9,408.2 1140.6,423.7 1137.3,422.3" fill="#c2aea4"/><polygon points="1133.7,434.0 1143.1,438.1 1145.5,461.1 1136.2,456.7" fill="#1c1d21"/><polygon points="1133.7,434.0 1143.1,438.1 1143.4,441.6 1134.1,437.5" fill="#e2ded0"/><polygon points="1135.4,441.3 1138.6,442.8 1140.0,455.3 1136.8,453.8" fill="#c2aea4"/><polygon points="1139.6,443.2 1142.9,444.6 1144.2,457.2 1140.9,455.7" fill="#c2aea4"/><polygon points="1137.5,467.9 1146.8,472.4 1149.2,494.6 1139.9,489.8" fill="#1c1d21"/><polygon points="1137.5,467.9 1146.8,472.4 1147.1,475.8 1137.9,471.2" fill="#e2ded0"/><polygon points="1139.1,475.0 1142.4,476.6 1143.7,488.7 1140.5,487.0" fill="#c2aea4"/><polygon points="1143.3,477.0 1146.6,478.6 1147.9,490.8 1144.6,489.1" fill="#c2aea4"/><polygon points="1142.7,386.3 1150.5,389.0 1162.1,503.5 1154.6,499.5" fill="#383b41"/><polyline points="1142.4,383.8 1154.7,500.6" stroke="#4a2010" stroke-width="0.6" fill="none"/><polygon points="1145.2,403.7 1151.5,406.0 1154.2,432.7 1148.0,430.1" fill="#1c1d21"/><polygon points="1145.2,403.7 1151.5,406.0 1151.8,409.7 1145.6,407.4" fill="#e2ded0"/><polygon points="1147.2,411.5 1151.0,412.9 1152.6,428.6 1148.9,427.1" fill="#a9aec2"/><polygon points="1149.1,440.7 1155.3,443.4 1157.7,466.8 1151.6,463.9" fill="#1c1d21"/><polygon points="1149.1,440.7 1155.3,443.4 1155.6,446.9 1149.5,444.3" fill="#e2ded0"/><polygon points="1151.1,448.3 1154.8,449.9 1156.1,462.7 1152.4,461.0" fill="#a9aec2"/><polygon points="1152.8,475.3 1158.8,478.3 1161.1,500.8 1155.1,497.7" fill="#1c1d21"/><polygon points="1152.8,475.3 1158.8,478.3 1159.2,481.7 1153.1,478.7" fill="#e2ded0"/><polygon points="1154.7,482.7 1158.3,484.5 1159.6,496.9 1156.0,495.0" fill="#a9aec2"/><polygon points="1160.0,392.3 1173.8,397.1 1184.5,515.2 1171.3,508.3" fill="#383b41"/><polyline points="1159.8,389.8 1171.4,509.4" stroke="#4a2010" stroke-width="0.6" fill="none"/><polygon points="1163.1,410.4 1174.1,414.5 1176.6,442.0 1165.7,437.5" fill="#1c1d21"/><polygon points="1163.1,410.4 1174.1,414.5 1174.4,418.3 1163.4,414.1" fill="#e2ded0"/><polygon points="1164.9,418.3 1168.7,419.8 1170.2,435.8 1166.4,434.3" fill="#c2aea4"/><polygon points="1169.8,420.2 1173.6,421.7 1175.1,437.9 1171.3,436.3" fill="#c2aea4"/><polygon points="1166.7,448.4 1177.6,453.1 1179.8,477.2 1169.0,472.1" fill="#1c1d21"/><polygon points="1166.7,448.4 1177.6,453.1 1177.9,456.7 1167.1,452.0" fill="#e2ded0"/><polygon points="1168.5,456.0 1172.3,457.7 1173.5,470.8 1169.8,469.1" fill="#c2aea4"/><polygon points="1173.3,458.2 1177.2,459.9 1178.4,473.1 1174.6,471.3" fill="#c2aea4"/><polygon points="1170.2,483.8 1180.9,489.0 1183.0,512.2 1172.4,506.7" fill="#1c1d21"/><polygon points="1170.2,483.8 1180.9,489.0 1181.2,492.5 1170.5,487.3" fill="#e2ded0"/><polygon points="1171.9,491.2 1175.6,493.1 1176.8,505.7 1173.1,503.8" fill="#c2aea4"/><polygon points="1176.7,493.6 1180.4,495.5 1181.6,508.2 1177.8,506.3" fill="#c2aea4"/><polygon points="1178.7,398.8 1193.6,404.0 1203.4,525.1 1189.2,517.7" fill="#383b41"/><polyline points="1178.5,396.2 1189.3,518.8" stroke="#4a2010" stroke-width="0.6" fill="none"/><polygon points="1181.7,417.4 1193.6,421.8 1195.9,450.1 1184.2,445.2" fill="#1c1d21"/><polygon points="1181.7,417.4 1193.6,421.8 1193.9,425.7 1182.1,421.2" fill="#e2ded0"/><polygon points="1183.6,425.5 1187.7,427.1 1189.1,443.6 1185.0,441.9" fill="#c2aea4"/><polygon points="1188.8,427.6 1193.0,429.2 1194.4,445.8 1190.2,444.1" fill="#c2aea4"/><polygon points="1185.2,456.3 1196.8,461.4 1198.8,486.1 1187.3,480.7" fill="#1c1d21"/><polygon points="1185.2,456.3 1196.8,461.4 1197.1,465.1 1185.5,460.0" fill="#e2ded0"/><polygon points="1186.9,464.2 1191.0,466.0 1192.1,479.5 1188.1,477.6" fill="#c2aea4"/><polygon points="1192.1,466.5 1196.2,468.3 1197.4,481.9 1193.3,480.0" fill="#c2aea4"/><polygon points="1188.3,492.6 1199.8,498.2 1201.8,522.0 1190.4,516.1" fill="#1c1d21"/><polygon points="1188.3,492.6 1199.8,498.2 1200.1,501.8 1188.6,496.2" fill="#e2ded0"/><polygon points="1190.1,500.3 1194.1,502.3 1195.2,515.2 1191.2,513.2" fill="#c2aea4"/><polygon points="1195.2,502.8 1199.3,504.8 1200.3,517.9 1196.3,515.8" fill="#c2aea4"/><polygon points="1198.8,405.8 1214.8,411.4 1223.7,535.7 1208.4,527.7" fill="#383b41"/><polyline points="1198.6,403.1 1208.5,528.9" stroke="#4a2010" stroke-width="0.6" fill="none"/><polygon points="1201.8,424.9 1214.6,429.7 1216.6,458.7 1204.1,453.5" fill="#1c1d21"/><polygon points="1201.8,424.9 1214.6,429.7 1214.8,433.7 1202.1,428.9" fill="#e2ded0"/><polygon points="1203.7,433.3 1208.1,435.0 1209.4,451.9 1205.0,450.1" fill="#a9aec2"/><polygon points="1209.4,435.5 1213.8,437.2 1215.1,454.3 1210.6,452.5" fill="#a9aec2"/><polygon points="1204.9,464.9 1217.5,470.3 1219.3,495.7 1206.9,489.9" fill="#1c1d21"/><polygon points="1204.9,464.9 1217.5,470.3 1217.7,474.2 1205.2,468.7" fill="#e2ded0"/><polygon points="1206.8,473.0 1211.1,474.9 1212.1,488.7 1207.8,486.7" fill="#a9aec2"/><polygon points="1212.3,475.5 1216.7,477.5 1217.8,491.3 1213.4,489.3" fill="#a9aec2"/><polygon points="1207.8,502.1 1220.2,508.1 1221.9,532.5 1209.7,526.1" fill="#1c1d21"/><polygon points="1207.8,502.1 1220.2,508.1 1220.4,511.8 1208.1,505.8" fill="#e2ded0"/><polygon points="1209.6,510.0 1213.9,512.1 1214.9,525.4 1210.6,523.2" fill="#a9aec2"/><polygon points="1215.1,512.7 1219.5,514.9 1220.4,528.2 1216.1,526.0" fill="#a9aec2"/><polygon points="1220.5,413.3 1231.0,417.0 1238.9,543.7 1229.0,538.5" fill="#383b41"/><polyline points="1220.3,410.6 1229.1,539.7" stroke="#4a2010" stroke-width="0.6" fill="none"/><polygon points="1222.8,432.8 1231.1,435.9 1233.0,465.5 1224.8,462.1" fill="#1c1d21"/><polygon points="1222.8,432.8 1231.1,435.9 1231.4,440.0 1223.1,436.9" fill="#e2ded0"/><polygon points="1225.0,441.5 1230.0,443.5 1231.1,460.9 1226.1,458.8" fill="#a9aec2"/><polygon points="1225.6,473.9 1233.8,477.4 1235.4,503.3 1227.3,499.5" fill="#1c1d21"/><polygon points="1225.6,473.9 1233.8,477.4 1234.0,481.3 1225.8,477.7" fill="#e2ded0"/><polygon points="1227.7,482.3 1232.6,484.5 1233.5,498.7 1228.7,496.4" fill="#a9aec2"/><polygon points="1228.2,512.0 1236.2,515.9 1237.8,540.8 1229.8,536.6" fill="#1c1d21"/><polygon points="1228.2,512.0 1236.2,515.9 1236.4,519.7 1228.4,515.7" fill="#e2ded0"/><polygon points="1230.2,520.2 1235.1,522.6 1235.9,536.2 1231.2,533.8" fill="#a9aec2"/><polygon points="1229.4,416.5 1247.1,422.6 1254.2,551.7 1237.5,543.0" fill="#383b41"/><polyline points="1229.2,413.7 1237.6,544.2" stroke="#4a2010" stroke-width="0.6" fill="none"/><polygon points="1232.4,436.4 1246.4,441.7 1248.1,471.8 1234.2,466.1" fill="#1c1d21"/><polygon points="1232.4,436.4 1246.4,441.7 1246.6,445.8 1232.6,440.5" fill="#e2ded0"/><polygon points="1234.2,445.1 1239.1,447.0 1240.2,464.6 1235.3,462.6" fill="#a9aec2"/><polygon points="1240.5,447.5 1245.4,449.4 1246.4,467.2 1241.5,465.2" fill="#a9aec2"/><polygon points="1235.0,477.9 1248.8,483.9 1250.2,510.2 1236.6,503.8" fill="#1c1d21"/><polygon points="1235.0,477.9 1248.8,483.9 1249.0,487.9 1235.2,481.9" fill="#e2ded0"/><polygon points="1236.8,486.4 1241.6,488.5 1242.4,502.8 1237.7,500.6" fill="#a9aec2"/><polygon points="1243.0,489.1 1247.8,491.3 1248.6,505.7 1243.8,503.4" fill="#a9aec2"/><polygon points="1237.4,516.5 1251.0,523.1 1252.4,548.4 1239.0,541.4" fill="#1c1d21"/><polygon points="1237.4,516.5 1251.0,523.1 1251.2,526.9 1237.6,520.3" fill="#e2ded0"/><polygon points="1239.2,524.7 1243.9,527.0 1244.7,540.8 1240.1,538.4" fill="#a9aec2"/><polygon points="1245.2,527.7 1250.0,530.1 1250.8,543.9 1246.1,541.5" fill="#a9aec2"/><polygon points="1252.8,424.6 1270.6,430.8 1276.4,563.4 1259.6,554.6" fill="#383b41"/><polyline points="1252.7,421.7 1259.7,555.8" stroke="#4a2010" stroke-width="0.6" fill="none"/><polygon points="1255.6,445.1 1269.7,450.4 1271.1,481.4 1257.2,475.6" fill="#1c1d21"/><polygon points="1255.6,445.1 1269.7,450.4 1269.9,454.7 1255.8,449.3" fill="#e2ded0"/><polygon points="1257.4,454.1 1262.3,456.0 1263.2,474.1 1258.3,472.1" fill="#a9aec2"/><polygon points="1263.7,456.5 1268.7,458.4 1269.5,476.7 1264.6,474.6" fill="#a9aec2"/><polygon points="1257.8,487.8 1271.7,493.8 1272.9,520.8 1259.2,514.4" fill="#1c1d21"/><polygon points="1257.8,487.8 1271.7,493.8 1271.8,497.9 1258.0,491.9" fill="#e2ded0"/><polygon points="1259.6,496.5 1264.4,498.6 1265.1,513.3 1260.3,511.1" fill="#a9aec2"/><polygon points="1265.7,499.2 1270.6,501.4 1271.3,516.2 1266.4,513.9" fill="#a9aec2"/><polygon points="1259.8,527.4 1273.4,534.0 1274.6,559.9 1261.1,552.9" fill="#1c1d21"/><polygon points="1259.8,527.4 1273.4,534.0 1273.6,538.0 1260.0,531.3" fill="#e2ded0"/><polygon points="1261.6,535.8 1266.3,538.1 1267.0,552.2 1262.3,549.8" fill="#a9aec2"/><polygon points="1267.6,538.8 1272.4,541.2 1273.1,555.4 1268.3,552.9" fill="#a9aec2"/><polygon points="1276.3,432.8 1294.2,439.0 1298.6,575.0 1281.7,566.2" fill="#383b41"/><polyline points="1276.2,429.8 1281.8,567.4" stroke="#4a2010" stroke-width="0.6" fill="none"/><polygon points="1278.9,453.9 1293.1,459.2 1294.1,491.0 1280.1,485.2" fill="#1c1d21"/><polygon points="1278.9,453.9 1293.1,459.2 1293.2,463.6 1279.0,458.2" fill="#e2ded0"/><polygon points="1280.6,463.0 1285.5,464.9 1286.2,483.5 1281.3,481.5" fill="#c2aea4"/><polygon points="1286.9,465.5 1291.9,467.4 1292.6,486.2 1287.6,484.1" fill="#c2aea4"/><polygon points="1280.6,497.7 1294.5,503.7 1295.4,531.4 1281.7,525.0" fill="#1c1d21"/><polygon points="1280.6,497.7 1294.5,503.7 1294.7,507.9 1280.8,501.8" fill="#e2ded0"/><polygon points="1282.3,506.6 1287.1,508.7 1287.7,523.8 1282.9,521.6" fill="#c2aea4"/><polygon points="1288.5,509.3 1293.4,511.5 1293.9,526.7 1289.0,524.4" fill="#c2aea4"/><polygon points="1282.2,538.3 1295.9,545.0 1296.8,571.5 1283.3,564.5" fill="#1c1d21"/><polygon points="1282.2,538.3 1295.9,545.0 1296.0,549.0 1282.4,542.3" fill="#e2ded0"/><polygon points="1283.9,546.9 1288.6,549.3 1289.1,563.7 1284.4,561.3" fill="#c2aea4"/><polygon points="1290.0,549.9 1294.8,552.3 1295.3,566.8 1290.5,564.4" fill="#c2aea4"/><polygon points="1299.8,441.0 1310.7,444.7 1313.9,583.1 1303.8,577.7" fill="#383b41"/><polyline points="1299.7,437.9 1303.8,579.0" stroke="#4a2010" stroke-width="0.6" fill="none"/><polygon points="1301.4,462.3 1310.1,465.6 1310.9,498.0 1302.4,494.5" fill="#1c1d21"/><polygon points="1301.4,462.3 1310.1,465.6 1310.2,470.1 1301.6,466.8" fill="#e2ded0"/><polygon points="1303.4,471.9 1308.6,473.9 1309.0,492.9 1303.9,490.8" fill="#a9aec2"/><polygon points="1302.7,507.3 1311.2,510.9 1311.9,539.1 1303.5,535.2" fill="#1c1d21"/><polygon points="1302.7,507.3 1311.2,510.9 1311.3,515.2 1302.9,511.5" fill="#e2ded0"/><polygon points="1304.6,516.5 1309.7,518.7 1310.1,534.2 1305.1,531.8" fill="#a9aec2"/><polygon points="1303.9,548.9 1312.2,552.9 1312.8,579.9 1304.7,575.6" fill="#1c1d21"/><polygon points="1303.9,548.9 1312.2,552.9 1312.3,557.0 1304.0,552.9" fill="#e2ded0"/><polygon points="1305.8,557.8 1310.7,560.2 1311.1,575.0 1306.2,572.5" fill="#a9aec2"/><polygon points="1317.9,447.3 1335.9,453.5 1337.4,595.4 1320.6,586.6" fill="#383b41"/><polyline points="1317.8,444.2 1320.7,587.9" stroke="#4a2010" stroke-width="0.6" fill="none"/><polygon points="1320.0,469.3 1334.3,474.7 1334.7,507.9 1320.7,502.1" fill="#1c1d21"/><polygon points="1320.0,469.3 1334.3,474.7 1334.3,479.3 1320.1,473.8" fill="#e2ded0"/><polygon points="1321.6,478.9 1326.5,480.8 1326.8,500.2 1322.0,498.2" fill="#a9aec2"/><polygon points="1327.9,481.3 1333.0,483.3 1333.2,502.9 1328.2,500.8" fill="#a9aec2"/><polygon points="1320.9,515.2 1334.8,521.2 1335.2,550.1 1321.5,543.6" fill="#1c1d21"/><polygon points="1320.9,515.2 1334.8,521.2 1334.9,525.6 1321.0,519.5" fill="#e2ded0"/><polygon points="1322.4,524.4 1327.3,526.5 1327.5,542.3 1322.7,540.0" fill="#a9aec2"/><polygon points="1328.6,527.2 1333.5,529.3 1333.7,545.1 1328.9,542.9" fill="#a9aec2"/><polygon points="1358.0,461.2 1378.7,468.4 1377.1,616.2 1358.0,606.1" fill="#383b41"/><polyline points="1358.0,458.0 1358.0,607.5" stroke="#4a2010" stroke-width="0.6" fill="none"/><polygon points="1360.0,484.3 1376.3,490.4 1376.0,525.1 1360.0,518.5" fill="#1c1d21"/><polygon points="1360.0,484.3 1376.3,490.4 1376.3,495.2 1360.0,489.0" fill="#e2ded0"/><polygon points="1361.6,494.4 1367.2,496.5 1367.1,516.8 1361.5,514.5" fill="#a9aec2"/><polygon points="1368.8,497.2 1374.6,499.4 1374.4,519.8 1368.7,517.5" fill="#a9aec2"/><polygon points="1359.9,532.1 1375.9,539.0 1375.6,569.0 1359.9,561.7" fill="#1c1d21"/><polygon points="1359.9,532.1 1375.9,539.0 1375.8,543.5 1359.9,536.6" fill="#e2ded0"/><polygon points="1361.5,541.7 1367.0,544.2 1366.9,560.5 1361.5,558.0" fill="#a9aec2"/><polygon points="1368.6,544.9 1374.2,547.4 1374.0,563.8 1368.5,561.3" fill="#a9aec2"/><polygon points="1359.9,576.1 1375.4,583.7 1375.1,612.3 1359.8,604.4" fill="#1c1d21"/><polygon points="1359.9,576.1 1375.4,583.7 1375.4,588.0 1359.9,580.4" fill="#e2ded0"/><polygon points="1361.4,585.4 1366.8,588.1 1366.7,603.7 1361.4,600.9" fill="#a9aec2"/><polygon points="1368.3,588.9 1373.8,591.6 1373.6,607.3 1368.2,604.5" fill="#a9aec2"/><polygon points="1386.9,471.3 1398.3,475.3 1395.1,625.6 1384.7,620.1" fill="#383b41"/><polyline points="1387.0,468.0 1384.7,621.6" stroke="#4a2010" stroke-width="0.6" fill="none"/><polygon points="1387.7,494.7 1396.7,498.1 1396.0,533.5 1387.1,529.8" fill="#1c1d21"/><polygon points="1387.7,494.7 1396.7,498.1 1396.6,503.0 1387.6,499.6" fill="#e2ded0"/><polygon points="1389.3,505.1 1394.7,507.2 1394.3,528.0 1389.0,525.8" fill="#c2aea4"/><polygon points="1386.9,543.8 1395.7,547.6 1395.0,578.2 1386.4,574.1" fill="#1c1d21"/><polygon points="1386.9,543.8 1395.7,547.6 1395.6,552.2 1386.8,548.4" fill="#e2ded0"/><polygon points="1388.5,553.7 1393.7,556.1 1393.4,572.8 1388.2,570.4" fill="#c2aea4"/><polygon points="1386.2,588.9 1394.7,593.1 1394.1,622.2 1385.8,617.8" fill="#1c1d21"/><polygon points="1386.2,588.9 1394.7,593.1 1394.6,597.5 1386.1,593.3" fill="#e2ded0"/><polygon points="1387.8,598.5 1392.8,601.1 1392.5,617.0 1387.5,614.4" fill="#c2aea4"/><line x1="1055.0" y1="366.9" x2="1418.3" y2="501.1" stroke="#4a2010" stroke-width="0.5"/><polygon points="1477.0,462.0 1477.0,398.0 1681.0,311.0 1680.0,338.0 1695.0,339.0 1687.0,433.0 1681.0,437.0 1590.0,487.0 1590.0,452.0 1558.0,470.0 1558.0,534.0 1479.0,589.0" fill="#fa8a5d" stroke="#4a2010" stroke-width="0.8"/><polygon points="1480.7,409.9 1493.2,404.3 1493.6,445.5 1481.1,451.9" fill="#3f434a"/><polygon points="1482.6,428.0 1491.6,423.7 1491.8,443.5 1482.8,448.2" fill="#1a1b1e"/><polygon points="1481.2,461.5 1493.6,454.8 1494.0,493.9 1481.6,501.4" fill="#3f434a"/><polygon points="1483.1,478.5 1492.1,473.3 1492.3,492.1 1483.3,497.5" fill="#1a1b1e"/><polygon points="1485.7,512.2 1493.1,507.5 1493.4,537.2 1486.0,542.3" fill="#2f3035"/><polygon points="1487.9,518.3 1491.1,516.3 1491.2,534.9 1488.1,537.1" fill="#9c8c88"/><polygon points="1486.1,551.6 1493.5,546.5 1493.8,576.0 1486.4,581.6" fill="#2f3035"/><polygon points="1488.3,557.6 1491.4,555.4 1491.6,573.9 1488.5,576.3" fill="#9c8c88"/><polygon points="1501.9,400.4 1513.5,395.2 1513.8,434.9 1502.2,440.9" fill="#3f434a"/><polygon points="1503.7,417.9 1512.0,413.8 1512.2,433.0 1503.8,437.3" fill="#1a1b1e"/><polygon points="1502.3,450.1 1513.9,443.9 1514.2,481.6 1502.7,488.6" fill="#3f434a"/><polygon points="1504.1,466.5 1512.5,461.8 1512.6,479.9 1504.3,484.9" fill="#1a1b1e"/><polygon points="1506.4,499.1 1513.3,494.8 1513.6,523.4 1506.7,528.2" fill="#2f3035"/><polygon points="1508.5,505.1 1511.4,503.2 1511.6,521.2 1508.6,523.2" fill="#9c8c88"/><polygon points="1506.8,537.2 1513.7,532.4 1513.9,560.9 1507.0,566.1" fill="#2f3035"/><polygon points="1508.8,543.0 1511.8,540.9 1511.9,558.8 1509.0,561.0" fill="#9c8c88"/><polygon points="1521.6,391.5 1532.4,386.7 1532.7,425.1 1521.9,430.7" fill="#3f434a"/><polygon points="1523.2,408.4 1531.0,404.7 1531.2,423.2 1523.4,427.2" fill="#1a1b1e"/><polygon points="1522.0,439.6 1532.7,433.8 1533.0,470.2 1522.3,476.7" fill="#3f434a"/><polygon points="1523.6,455.4 1531.4,451.0 1531.5,468.5 1523.8,473.2" fill="#1a1b1e"/><polygon points="1525.7,487.0 1532.2,482.9 1532.4,510.6 1526.0,515.0" fill="#2f3035"/><polygon points="1527.7,492.8 1530.4,491.0 1530.6,508.4 1527.8,510.3" fill="#9c8c88"/><polygon points="1526.0,523.8 1532.5,519.3 1532.7,546.9 1526.3,551.7" fill="#2f3035"/><polygon points="1528.0,529.4 1530.7,527.5 1530.8,544.8 1528.1,546.8" fill="#9c8c88"/><polygon points="1538.1,372.8 1551.0,367.3 1552.1,533.2 1539.3,542.7" fill="#3f434a"/><polyline points="1551.0,366.4 1552.1,534.0" stroke="#4a2010" stroke-width="0.6" fill="none"/><polygon points="1541.1,394.8 1548.9,391.1 1549.1,418.2 1541.3,422.3" fill="#1d1e22"/><polygon points="1542.1,397.8 1544.4,396.7 1544.6,418.8 1542.3,420.0" fill="#b08c80"/><polygon points="1545.7,396.1 1548.0,395.0 1548.1,417.0 1545.8,418.2" fill="#b08c80"/><polygon points="1541.4,432.5 1549.1,428.3 1549.3,458.6 1541.6,463.3" fill="#1d1e22"/><polygon points="1542.4,435.4 1544.7,434.1 1544.9,459.6 1542.6,461.0" fill="#b08c80"/><polygon points="1545.9,433.5 1548.2,432.2 1548.4,457.5 1546.1,458.9" fill="#b08c80"/><polygon points="1541.7,476.9 1549.4,472.1 1549.6,498.9 1541.9,504.1" fill="#1d1e22"/><polygon points="1542.7,479.7 1545.0,478.3 1545.2,500.2 1542.9,501.8" fill="#b08c80"/><polygon points="1546.2,477.5 1548.5,476.0 1548.7,497.9 1546.4,499.4" fill="#b08c80"/><polygon points="1542.0,514.3 1549.7,509.0 1549.8,534.0 1542.2,539.8" fill="#1d1e22"/><polygon points="1543.0,517.1 1545.3,515.4 1545.4,535.6 1543.1,537.4" fill="#b08c80"/><polygon points="1546.5,514.6 1548.8,512.9 1548.9,533.0 1546.6,534.7" fill="#b08c80"/><polygon points="1555.4,365.4 1567.5,360.2 1568.4,520.9 1556.5,529.9" fill="#3f434a"/><polyline points="1567.5,359.4 1568.4,521.7" stroke="#4a2010" stroke-width="0.6" fill="none"/><polygon points="1558.2,386.7 1565.5,383.3 1565.6,409.5 1558.4,413.3" fill="#1d1e22"/><polygon points="1559.1,389.6 1561.3,388.6 1561.5,410.0 1559.3,411.2" fill="#b08c80"/><polygon points="1562.5,388.0 1564.6,387.0 1564.8,408.3 1562.6,409.4" fill="#b08c80"/><polygon points="1558.5,423.2 1565.7,419.3 1565.9,448.7 1558.7,453.0" fill="#1d1e22"/><polygon points="1559.4,426.1 1561.6,424.9 1561.7,449.5 1559.5,450.8" fill="#b08c80"/><polygon points="1562.7,424.2 1564.9,423.0 1565.0,447.6 1562.9,448.8" fill="#b08c80"/><polygon points="1558.7,466.2 1566.0,461.7 1566.1,487.7 1558.9,492.6" fill="#1d1e22"/><polygon points="1559.6,469.0 1561.8,467.6 1561.9,488.9 1559.8,490.3" fill="#b08c80"/><polygon points="1563.0,466.8 1565.1,465.5 1565.2,486.6 1563.1,488.1" fill="#b08c80"/><polygon points="1559.0,502.4 1566.2,497.4 1566.3,521.7 1559.1,527.1" fill="#1d1e22"/><polygon points="1559.9,505.1 1562.0,503.6 1562.2,523.2 1560.0,524.8" fill="#b08c80"/><polygon points="1563.2,502.8 1565.3,501.2 1565.4,520.7 1563.3,522.3" fill="#b08c80"/><polygon points="1571.6,358.5 1583.0,353.6 1583.7,509.4 1572.5,517.8" fill="#3f434a"/><polyline points="1583.0,352.8 1583.7,510.2" stroke="#4a2010" stroke-width="0.6" fill="none"/><polygon points="1574.3,379.2 1581.1,375.9 1581.2,401.3 1574.4,404.9" fill="#1d1e22"/><polygon points="1575.1,382.0 1577.2,381.0 1577.3,401.8 1575.2,402.9" fill="#b08c80"/><polygon points="1578.2,380.5 1580.3,379.5 1580.4,400.2 1578.4,401.2" fill="#b08c80"/><polygon points="1574.5,414.5 1581.2,410.8 1581.4,439.3 1574.6,443.4" fill="#1d1e22"/><polygon points="1575.3,417.3 1577.3,416.2 1577.5,440.1 1575.4,441.3" fill="#b08c80"/><polygon points="1578.4,415.6 1580.5,414.5 1580.6,438.2 1578.6,439.4" fill="#b08c80"/><polygon points="1574.7,456.2 1581.5,451.9 1581.6,477.1 1574.8,481.7" fill="#1d1e22"/><polygon points="1575.5,458.9 1577.6,457.6 1577.7,478.2 1575.6,479.6" fill="#b08c80"/><polygon points="1578.7,456.9 1580.7,455.6 1580.8,476.1 1578.8,477.5" fill="#b08c80"/><polygon points="1574.9,491.3 1581.6,486.6 1581.8,510.1 1575.0,515.2" fill="#1d1e22"/><polygon points="1575.7,493.9 1577.8,492.5 1577.9,511.4 1575.8,513.0" fill="#b08c80"/><polygon points="1578.8,491.7 1580.8,490.3 1580.9,509.1 1578.9,510.6" fill="#b08c80"/><polygon points="1586.8,352.0 1597.5,347.4 1598.1,498.6 1587.6,506.5" fill="#3f434a"/><polyline points="1597.5,346.6 1598.1,499.3" stroke="#4a2010" stroke-width="0.6" fill="none"/><polygon points="1589.3,372.0 1595.7,369.0 1595.8,393.7 1589.4,397.0" fill="#1d1e22"/><polygon points="1590.1,374.8 1592.0,373.9 1592.1,394.1 1590.2,395.1" fill="#b08c80"/><polygon points="1593.1,373.4 1595.0,372.5 1595.0,392.5 1593.1,393.5" fill="#b08c80"/><polygon points="1589.5,406.4 1595.9,402.9 1596.0,430.5 1589.6,434.4" fill="#1d1e22"/><polygon points="1590.3,409.1 1592.2,408.0 1592.3,431.2 1590.4,432.3" fill="#b08c80"/><polygon points="1593.2,407.4 1595.1,406.4 1595.2,429.4 1593.3,430.6" fill="#b08c80"/><polygon points="1589.7,446.8 1596.0,442.8 1596.1,467.2 1589.8,471.6" fill="#1d1e22"/><polygon points="1590.5,449.4 1592.4,448.2 1592.5,468.2 1590.5,469.5" fill="#b08c80"/><polygon points="1593.4,447.5 1595.3,446.3 1595.4,466.2 1593.5,467.5" fill="#b08c80"/><polygon points="1589.8,480.8 1596.2,476.4 1596.3,499.2 1589.9,504.0" fill="#1d1e22"/><polygon points="1590.6,483.4 1592.5,482.0 1592.6,500.4 1590.7,501.9" fill="#b08c80"/><polygon points="1593.5,481.3 1595.4,480.0 1595.5,498.3 1593.6,499.7" fill="#b08c80"/><polygon points="1601.1,345.8 1611.2,341.5 1611.7,488.4 1601.7,495.9" fill="#3f434a"/><polyline points="1611.2,340.8 1611.7,489.1" stroke="#4a2010" stroke-width="0.6" fill="none"/><polygon points="1603.5,365.4 1609.5,362.5 1609.6,386.4 1603.6,389.6" fill="#1d1e22"/><polygon points="1604.2,368.0 1606.0,367.2 1606.1,386.8 1604.3,387.7" fill="#b08c80"/><polygon points="1607.0,366.7 1608.8,365.9 1608.9,385.3 1607.1,386.3" fill="#b08c80"/><polygon points="1603.6,398.7 1609.6,395.4 1609.7,422.2 1603.7,425.9" fill="#1d1e22"/><polygon points="1604.3,401.3 1606.2,400.3 1606.2,422.8 1604.4,423.9" fill="#b08c80"/><polygon points="1607.1,399.8 1608.9,398.8 1609.0,421.2 1607.2,422.2" fill="#b08c80"/><polygon points="1603.8,437.9 1609.7,434.1 1609.8,457.9 1603.9,462.0" fill="#1d1e22"/><polygon points="1604.5,440.5 1606.3,439.3 1606.4,458.7 1604.6,460.0" fill="#b08c80"/><polygon points="1607.3,438.7 1609.0,437.6 1609.1,456.9 1607.3,458.1" fill="#b08c80"/><polygon points="1603.9,471.0 1609.9,466.8 1609.9,489.0 1604.0,493.5" fill="#1d1e22"/><polygon points="1604.6,473.5 1606.4,472.2 1606.5,490.1 1604.7,491.4" fill="#b08c80"/><polygon points="1607.4,471.5 1609.2,470.2 1609.2,488.0 1607.5,489.4" fill="#b08c80"/><polygon points="1614.6,340.1 1624.1,336.0 1624.5,478.8 1615.1,485.8" fill="#3f434a"/><polyline points="1624.1,335.3 1624.5,479.5" stroke="#4a2010" stroke-width="0.6" fill="none"/><polygon points="1616.8,359.1 1622.5,356.4 1622.6,379.6 1616.9,382.6" fill="#1d1e22"/><polygon points="1617.5,361.7 1619.2,360.9 1619.3,379.9 1617.6,380.8" fill="#b08c80"/><polygon points="1620.1,360.4 1621.8,359.6 1621.9,378.5 1620.2,379.4" fill="#b08c80"/><polygon points="1616.9,391.4 1622.6,388.3 1622.7,414.4 1617.0,417.8" fill="#1d1e22"/><polygon points="1617.6,394.0 1619.3,393.0 1619.4,414.9 1617.7,416.0" fill="#b08c80"/><polygon points="1620.2,392.5 1621.9,391.6 1622.0,413.4 1620.3,414.4" fill="#b08c80"/><polygon points="1617.0,429.5 1622.7,426.0 1622.8,449.1 1617.1,452.9" fill="#1d1e22"/><polygon points="1617.7,432.0 1619.4,431.0 1619.5,449.9 1617.8,451.0" fill="#b08c80"/><polygon points="1620.3,430.4 1622.0,429.3 1622.1,448.1 1620.4,449.2" fill="#b08c80"/><polygon points="1617.1,461.7 1622.8,457.7 1622.9,479.3 1617.2,483.5" fill="#1d1e22"/><polygon points="1617.8,464.1 1619.5,462.9 1619.6,480.3 1617.9,481.6" fill="#b08c80"/><polygon points="1620.4,462.3 1622.1,461.1 1622.2,478.4 1620.5,479.6" fill="#b08c80"/><polygon points="1627.3,334.6 1636.3,330.8 1636.6,469.7 1627.7,476.4" fill="#3f434a"/><polyline points="1636.3,330.1 1636.6,470.4" stroke="#4a2010" stroke-width="0.6" fill="none"/><polygon points="1629.4,353.1 1634.8,350.6 1634.8,373.2 1629.5,376.0" fill="#1d1e22"/><polygon points="1630.1,355.7 1631.7,354.9 1631.7,373.4 1630.1,374.2" fill="#b08c80"/><polygon points="1632.5,354.5 1634.1,353.7 1634.2,372.1 1632.6,373.0" fill="#b08c80"/><polygon points="1629.5,384.6 1634.8,381.7 1634.9,407.0 1629.6,410.3" fill="#1d1e22"/><polygon points="1630.1,387.1 1631.8,386.2 1631.8,407.5 1630.2,408.5" fill="#b08c80"/><polygon points="1632.6,385.7 1634.2,384.8 1634.3,406.0 1632.7,407.0" fill="#b08c80"/><polygon points="1629.6,421.7 1634.9,418.3 1635.0,440.8 1629.6,444.4" fill="#1d1e22"/><polygon points="1630.2,424.1 1631.9,423.1 1631.9,441.4 1630.3,442.5" fill="#b08c80"/><polygon points="1632.7,422.5 1634.3,421.5 1634.3,439.8 1632.8,440.9" fill="#b08c80"/><polygon points="1629.7,452.9 1635.0,449.2 1635.1,470.2 1629.7,474.2" fill="#1d1e22"/><polygon points="1630.3,455.3 1631.9,454.2 1632.0,471.1 1630.4,472.3" fill="#b08c80"/><polygon points="1632.8,453.5 1634.4,452.4 1634.4,469.2 1632.8,470.4" fill="#b08c80"/><polygon points="1639.4,329.5 1647.9,325.8 1648.1,461.1 1639.7,467.4" fill="#3f434a"/><polyline points="1647.9,325.1 1648.1,461.8" stroke="#4a2010" stroke-width="0.6" fill="none"/><polygon points="1641.3,347.5 1646.4,345.1 1646.4,367.1 1641.4,369.8" fill="#1d1e22"/><polygon points="1641.9,350.0 1643.5,349.2 1643.5,367.3 1642.0,368.1" fill="#b08c80"/><polygon points="1644.3,348.9 1645.8,348.1 1645.8,366.0 1644.3,366.8" fill="#b08c80"/><polygon points="1641.4,378.1 1646.4,375.4 1646.5,400.1 1641.4,403.1" fill="#1d1e22"/><polygon points="1642.0,380.6 1643.5,379.7 1643.6,400.4 1642.0,401.4" fill="#b08c80"/><polygon points="1644.3,379.3 1645.9,378.4 1645.9,399.0 1644.4,399.9" fill="#b08c80"/><polygon points="1641.4,414.2 1646.5,411.0 1646.6,432.9 1641.5,436.3" fill="#1d1e22"/><polygon points="1642.1,416.6 1643.6,415.6 1643.6,433.5 1642.1,434.5" fill="#b08c80"/><polygon points="1644.4,415.1 1645.9,414.1 1645.9,431.9 1644.4,432.9" fill="#b08c80"/><polygon points="1641.5,444.6 1646.6,441.1 1646.6,461.5 1641.6,465.3" fill="#1d1e22"/><polygon points="1642.1,446.9 1643.7,445.9 1643.7,462.3 1642.2,463.5" fill="#b08c80"/><polygon points="1644.5,445.3 1646.0,444.2 1646.0,460.6 1644.5,461.7" fill="#b08c80"/><polygon points="1650.8,324.6 1658.8,321.1 1659.0,452.9 1651.0,458.9" fill="#3f434a"/><polyline points="1658.8,320.5 1659.0,453.6" stroke="#4a2010" stroke-width="0.6" fill="none"/><polygon points="1652.6,342.2 1657.4,339.9 1657.4,361.3 1652.6,363.9" fill="#1d1e22"/><polygon points="1653.2,344.6 1654.6,343.9 1654.7,361.4 1653.2,362.2" fill="#b08c80"/><polygon points="1655.4,343.5 1656.8,342.8 1656.9,360.3 1655.4,361.0" fill="#b08c80"/><polygon points="1652.6,372.0 1657.4,369.4 1657.5,393.4 1652.7,396.3" fill="#1d1e22"/><polygon points="1653.2,374.4 1654.7,373.6 1654.7,393.8 1653.3,394.6" fill="#b08c80"/><polygon points="1655.4,373.2 1656.9,372.4 1656.9,392.4 1655.5,393.3" fill="#b08c80"/><polygon points="1652.7,407.1 1657.5,404.1 1657.5,425.4 1652.7,428.7" fill="#1d1e22"/><polygon points="1653.3,409.5 1654.7,408.5 1654.7,426.0 1653.3,426.9" fill="#b08c80"/><polygon points="1655.5,408.0 1656.9,407.1 1656.9,424.5 1655.5,425.4" fill="#b08c80"/><polygon points="1652.7,436.8 1657.5,433.4 1657.5,453.3 1652.8,456.9" fill="#1d1e22"/><polygon points="1653.3,439.0 1654.8,438.0 1654.8,454.1 1653.3,455.1" fill="#b08c80"/><polygon points="1655.5,437.5 1657.0,436.5 1657.0,452.4 1655.5,453.5" fill="#b08c80"/><polygon points="1661.6,320.0 1669.2,316.7 1669.3,445.2 1661.7,450.9" fill="#3f434a"/><polyline points="1669.2,316.0 1669.3,445.8" stroke="#4a2010" stroke-width="0.6" fill="none"/><polygon points="1663.3,337.1 1667.9,334.9 1667.9,355.9 1663.3,358.3" fill="#1d1e22"/><polygon points="1663.8,339.5 1665.2,338.8 1665.2,355.9 1663.9,356.6" fill="#b08c80"/><polygon points="1666.0,338.5 1667.3,337.8 1667.3,354.8 1666.0,355.5" fill="#b08c80"/><polygon points="1663.3,366.2 1667.9,363.7 1667.9,387.1 1663.3,389.9" fill="#1d1e22"/><polygon points="1663.9,368.5 1665.2,367.7 1665.3,387.4 1663.9,388.2" fill="#b08c80"/><polygon points="1666.0,367.3 1667.3,366.6 1667.4,386.2 1666.0,387.0" fill="#b08c80"/><polygon points="1663.3,400.4 1667.9,397.5 1667.9,418.3 1663.4,421.4" fill="#1d1e22"/><polygon points="1663.9,402.7 1665.3,401.8 1665.3,418.8 1663.9,419.7" fill="#b08c80"/><polygon points="1666.0,401.4 1667.4,400.5 1667.4,417.4 1666.0,418.3" fill="#b08c80"/><polygon points="1663.4,429.3 1667.9,426.1 1667.9,445.5 1663.4,448.9" fill="#1d1e22"/><polygon points="1663.9,431.5 1665.3,430.6 1665.3,446.2 1663.9,447.2" fill="#b08c80"/><polygon points="1666.0,430.0 1667.4,429.1 1667.4,444.6 1666.0,445.7" fill="#b08c80"/><polygon points="1671.8,315.6 1679.1,312.5 1679.1,437.8 1671.9,443.2" fill="#3f434a"/><polyline points="1679.1,311.8 1679.1,438.4" stroke="#4a2010" stroke-width="0.6" fill="none"/><polygon points="1673.4,332.3 1677.8,330.3 1677.8,350.6 1673.5,352.9" fill="#1d1e22"/><polygon points="1674.0,334.6 1675.3,334.0 1675.3,350.7 1674.0,351.4" fill="#b08c80"/><polygon points="1676.0,333.7 1677.3,333.1 1677.3,349.6 1676.0,350.3" fill="#b08c80"/><polygon points="1673.5,360.7 1677.8,358.3 1677.8,381.2 1673.5,383.8" fill="#1d1e22"/><polygon points="1674.0,362.9 1675.3,362.2 1675.3,381.4 1674.0,382.2" fill="#b08c80"/><polygon points="1676.0,361.8 1677.3,361.1 1677.3,380.2 1676.0,381.0" fill="#b08c80"/><polygon points="1673.5,394.0 1677.8,391.3 1677.8,411.6 1673.5,414.5" fill="#1d1e22"/><polygon points="1674.0,396.3 1675.3,395.4 1675.3,412.0 1674.0,412.9" fill="#b08c80"/><polygon points="1676.0,395.0 1677.3,394.2 1677.3,410.7 1676.0,411.6" fill="#b08c80"/><polygon points="1673.5,422.2 1677.8,419.2 1677.8,438.1 1673.5,441.4" fill="#1d1e22"/><polygon points="1674.0,424.4 1675.3,423.5 1675.3,438.7 1674.0,439.7" fill="#b08c80"/><polygon points="1676.0,423.0 1677.3,422.1 1677.3,437.3 1676.0,438.2" fill="#b08c80"/><polygon points="1679.0,338.0 1695.0,339.0 1687.0,433.0 1678.0,437.0" fill="#f58a5e" stroke="#4a2010" stroke-width="0.5"/><circle cx="1682" cy="360" r="0.7" fill="#222"/><circle cx="1686" cy="359" r="0.7" fill="#222"/><circle cx="1690" cy="358" r="0.7" fill="#222"/><circle cx="1682" cy="378" r="0.7" fill="#222"/><circle cx="1686" cy="377" r="0.7" fill="#222"/><circle cx="1690" cy="376" r="0.7" fill="#222"/><circle cx="1682" cy="396" r="0.7" fill="#222"/><circle cx="1686" cy="395" r="0.7" fill="#222"/><circle cx="1690" cy="394" r="0.7" fill="#222"/><circle cx="1682" cy="414" r="0.7" fill="#222"/><circle cx="1686" cy="413" r="0.7" fill="#222"/><circle cx="1690" cy="412" r="0.7" fill="#222"/><polygon points="1556.0,488.0 1590.0,468.0 1590.0,520.0 1556.0,545.0" fill="#26282a"/><polygon points="1559.6,480.0 1587.0,471.0 1587.0,512.0 1559.6,515.0" fill="#3a3c3e" stroke="#222" stroke-width="0.5"/><polygon points="1564.0,514.0 1585.0,511.0 1585.0,531.0 1564.0,534.0" fill="#ecebe0" stroke="#333" stroke-width="0.5"/><polygon points="1561.0,531.0 1588.0,527.0 1588.0,533.0 1561.0,537.0" fill="#d8d6ca" stroke="#333" stroke-width="0.5"/><polygon points="1419.0,479.0 1477.0,462.0 1479.0,589.0 1414.0,637.0" fill="#fa8a5d" stroke="#4a2010" stroke-width="0.8"/><line x1="1417.0" y1="530.0" x2="1478.0" y2="512.0" stroke="#4a2010" stroke-width="0.5"/><line x1="1396.0" y1="500.0" x2="1419.0" y2="506.0" stroke="#4a2010" stroke-width="0.5"/><line x1="1421.0" y1="482.0" x2="1414.0" y2="637.0" stroke="#4a2010" stroke-width="1.2"/><polygon points="1058.0,391.0 1416.0,543.0 1416.0,549.5 1058.0,396.0" fill="#fbf9ea" stroke="#2a2a2a" stroke-width="0.5"/><polygon points="1063.0,423.5 1416.0,588.6 1416.0,596.0 1063.0,428.0" fill="#fbf9ea" stroke="#2a2a2a" stroke-width="0.5"/><polygon points="1416.0,543.0 1421.0,543.3 1689.5,375.0 1689.5,380.0 1421.0,549.5 1416.0,549.5" fill="#fbf9ea" stroke="#2a2a2a" stroke-width="0.5"/><polygon points="1416.0,588.6 1421.0,588.6 1684.4,404.7 1684.4,409.5 1421.0,596.0 1416.0,596.0" fill="#fbf9ea" stroke="#2a2a2a" stroke-width="0.5"/><polygon points="1101.0,445.0 1116.0,449.0 1123.0,452.0 1123.0,457.0 1101.0,451.0" fill="#3a3a3a" stroke="#aaa" stroke-width="0.5"/><polygon points="1448.0,567.0 1500.0,542.0 1500.0,553.0 1451.0,580.0" fill="#3a3a3a" stroke="#bbb" stroke-width="0.6"/><polygon points="1446.0,564.0 1497.0,538.0 1500.0,542.0 1449.0,568.0" fill="#a3a5ba"/><polygon points="1454.0,618.0 1490.0,592.0 1495.0,600.0 1460.0,629.0" fill="#8d8e99" stroke="#444" stroke-width="0.5"/><polygon points="1624.0,446.0 1650.0,437.0 1650.0,443.0 1624.0,452.0" fill="#3a3a3a" stroke="#aaa" stroke-width="0.5"/><polygon points="1624.0,443.0 1650.0,434.0 1652.0,437.0 1626.0,446.0" fill="#a9abc0"/><polygon points="1628.0,484.0 1642.0,470.0 1650.0,468.0 1636.0,487.0" fill="#8d8e99"/><polygon points="1053.0,353.0 1240.0,316.0 1372.0,290.0 1508.0,309.0 1556.0,295.0 1681.0,311.0 1477.0,398.0 1477.0,462.0 1419.0,477.0" fill="#fa8a5d" stroke="#4a2010" stroke-width="0.8"/><polygon points="1085.0,361.0 1240.0,328.0 1311.0,313.0 1372.0,301.0 1420.0,307.0 1499.0,320.0 1477.0,398.0 1477.0,462.0 1419.0,474.0 1060.0,356.0" fill="#abafcb"/><polygon points="1372.0,291.0 1508.0,309.0 1505.0,321.0 1372.0,301.0" fill="#dd7048" stroke="#4a2010" stroke-width="0.5"/><line x1="1058.0" y1="355.0" x2="1419.0" y2="477.0" stroke="#4a2010" stroke-width="1.4"/><line x1="1085.0" y1="361.0" x2="1311.0" y2="313.0" stroke="#ffffff" stroke-width="0.5"/><ellipse cx="1200" cy="362" rx="3" ry="1.3" fill="none" stroke="#6a6a78" stroke-width="0.8"/><ellipse cx="1232" cy="370" rx="3" ry="1.3" fill="none" stroke="#6a6a78" stroke-width="0.8"/><ellipse cx="1265" cy="376" rx="3" ry="1.3" fill="none" stroke="#6a6a78" stroke-width="0.8"/><ellipse cx="1210" cy="390" rx="3" ry="1.3" fill="none" stroke="#6a6a78" stroke-width="0.8"/><ellipse cx="1233" cy="395" rx="3" ry="1.3" fill="none" stroke="#6a6a78" stroke-width="0.8"/><ellipse cx="1262" cy="402" rx="3" ry="1.3" fill="none" stroke="#6a6a78" stroke-width="0.8"/><ellipse cx="1300" cy="410" rx="3" ry="1.3" fill="none" stroke="#6a6a78" stroke-width="0.8"/><ellipse cx="1165" cy="366" rx="3" ry="1.3" fill="none" stroke="#6a6a78" stroke-width="0.8"/><ellipse cx="1140" cy="375" rx="3" ry="1.3" fill="none" stroke="#6a6a78" stroke-width="0.8"/><ellipse cx="1290" cy="395" rx="3" ry="1.3" fill="none" stroke="#6a6a78" stroke-width="0.8"/><ellipse cx="1320" cy="418" rx="3" ry="1.3" fill="none" stroke="#6a6a78" stroke-width="0.8"/><ellipse cx="1180" cy="352" rx="3" ry="1.3" fill="none" stroke="#6a6a78" stroke-width="0.8"/><polyline points="1161,368 1161,372 1250,352" stroke="#111" stroke-width="0.9" fill="none"/><line x1="1207.0" y1="354.0" x2="1207.0" y2="360.0" stroke="#555" stroke-width="1.2"/><line x1="1229.0" y1="358.0" x2="1229.0" y2="366.0" stroke="#555" stroke-width="1.2"/><polygon points="1252.0,350.0 1342.0,330.0 1342.0,355.0 1317.0,366.0" fill="#3a3c42"/><polygon points="1277.0,345.5 1280.5,344.5 1280.5,364.5 1277.0,365.5" fill="#fbf8e6"/><polygon points="1289.0,342.9 1292.5,341.9 1292.5,361.9 1289.0,362.9" fill="#fbf8e6"/><polygon points="1307.0,338.9 1310.5,337.9 1310.5,357.9 1307.0,358.9" fill="#fbf8e6"/><polygon points="1323.0,335.4 1326.5,334.4 1326.5,354.4 1323.0,355.4" fill="#fbf8e6"/><polygon points="1338.0,332.1 1341.5,331.1 1341.5,351.1 1338.0,352.1" fill="#fbf8e6"/><polygon points="1252.0,350.0 1317.0,366.0 1317.0,380.0 1252.0,363.0" fill="#fbf7df" stroke="#555" stroke-width="0.5"/><polygon points="1311.0,305.0 1378.0,308.0 1378.0,345.0 1311.0,335.0" fill="#d96c45" stroke="#4a2010" stroke-width="0.6"/><polygon points="1311.0,305.0 1333.0,301.0 1378.0,305.0 1378.0,308.0" fill="#fa8a5d" stroke="#4a2010" stroke-width="0.5"/><line x1="1338.0" y1="307.0" x2="1338.0" y2="343.0" stroke="#4a2010" stroke-width="0.5"/><line x1="1352.0" y1="307.0" x2="1352.0" y2="343.0" stroke="#4a2010" stroke-width="0.5"/><line x1="1357.0" y1="307.0" x2="1357.0" y2="343.0" stroke="#4a2010" stroke-width="0.5"/><polygon points="1363.0,316.0 1374.0,314.0 1374.0,345.0 1363.0,345.0" fill="#2a2a2a"/><polygon points="1365.0,317.0 1372.0,316.0 1372.0,344.0 1365.0,344.0" fill="#b88878"/><polygon points="1379.0,318.8 1469.0,331.5 1541.0,310.4 1541.0,323.0 1428.4,359.7 1427.0,344.2 1379.0,345.0" fill="#3a3c42"/><polygon points="1381.0,319.0 1385.2,319.6 1385.2,341.0 1381.0,340.4" fill="#fbf8e6"/><polygon points="1391.5,320.6 1395.7,321.2 1395.7,341.8 1391.5,341.2" fill="#fbf8e6"/><polygon points="1402.0,322.2 1406.2,322.8 1406.2,342.6 1402.0,342.0" fill="#fbf8e6"/><polygon points="1412.5,323.8 1416.7,324.4 1416.7,343.4 1412.5,342.8" fill="#fbf8e6"/><polygon points="1423.0,325.4 1427.2,326.0 1427.2,344.2 1423.0,343.6" fill="#fbf8e6"/><polygon points="1433.5,327.0 1437.7,327.6 1437.7,345.0 1433.5,344.4" fill="#fbf8e6"/><polygon points="1444.0,328.6 1448.2,329.2 1448.2,345.8 1444.0,345.2" fill="#fbf8e6"/><polygon points="1454.5,330.2 1458.7,330.8 1458.7,346.6 1454.5,346.0" fill="#fbf8e6"/><polygon points="1379.0,318.8 1391.0,320.5 1391.0,345.0 1379.0,345.0" fill="#ffffff"/><polygon points="1317.0,362.0 1477.0,398.0 1477.0,474.0 1322.0,428.0" fill="#d96c45" stroke="#4a2010" stroke-width="0.8"/><polygon points="1316.0,362.0 1400.0,339.0 1427.0,344.0 1541.0,310.4 1556.6,295.6 1681.0,311.0 1477.0,398.0" fill="#fa8a5d" stroke="#4a2010" stroke-width="0.8"/><polygon points="1316.0,362.0 1400.0,339.3 1400.0,354.0 1331.0,362.5" fill="#f58a5e" stroke="#4a2010" stroke-width="0.6"/><polygon points="1400.0,339.3 1427.0,344.2 1428.4,359.7 1400.0,354.0" fill="#d96c45" stroke="#4a2010" stroke-width="0.6"/><polygon points="1427.0,344.2 1541.0,310.4 1541.0,323.0 1428.4,359.7" fill="#f58a5e" stroke="#4a2010" stroke-width="0.6"/><polygon points="1331.0,362.5 1400.0,354.0 1428.4,359.7 1541.0,323.0 1542.5,309.0 1570.0,303.3 1649.0,320.0 1472.0,394.0 1352.0,367.4" fill="#abafcb"/><line x1="1320.0" y1="364.0" x2="1472.0" y2="396.0" stroke="#4a2010" stroke-width="1.1"/><line x1="1472.0" y1="396.0" x2="1649.0" y2="322.0" stroke="#4a2010" stroke-width="1.1"/><line x1="1433.0" y1="370.0" x2="1433.0" y2="380.0" stroke="#555" stroke-width="1"/><rect x="1550" y="303" width="2" height="6" fill="#111"/><polygon points="1323.0,380.0 1476.0,418.0 1476.0,474.0 1323.0,426.0" fill="#6db327" stroke="#33ff33" stroke-width="1.6"/><polygon points="1338.0,411.0 1345.0,410.0 1346.0,432.0 1339.0,433.0" fill="none" stroke="#66ff44" stroke-width="1.2"/><line x1="1341.0" y1="414.0" x2="1341.0" y2="430.0" stroke="#555" stroke-width="1.5"/><line x1="1427.0" y1="423.0" x2="1427.0" y2="410.0" stroke="#2288cc" stroke-width="1.2"/><line x1="1427.0" y1="423.0" x2="1437.0" y2="426.0" stroke="#30f030" stroke-width="1.2"/><line x1="1427.0" y1="423.0" x2="1419.0" y2="427.0" stroke="#c06020" stroke-width="1.2"/></svg>
<!--/BLD-->


<!-- RIGHT TOOLBAR -->
<div class="a" style="left:1827px;top:38px;width:36px;height:774px;background:#555"></div>
<div class="a" style="left:1827px;top:130px;width:36px;height:2px;background:#3e3e3e"></div>
<div class="a" style="left:1827px;top:398px;width:36px;height:2px;background:#3e3e3e"></div>
<div class="a" style="left:1827px;top:447px;width:36px;height:2px;background:#3e3e3e"></div>
<div class="a" style="left:1827px;top:628px;width:36px;height:2px;background:#3e3e3e"></div>
<div class="a" style="left:1827px;top:721px;width:36px;height:2px;background:#3e3e3e"></div>
<div class="a" style="left:1829px;top:638px;width:32px;height:32px;background:#8b8b8b"></div>
<div class="a" style="left:1829px;top:682px;width:32px;height:32px;background:#8b8b8b"></div>
<svg class="a" style="left:1827px;top:0" width="36" height="816" viewBox="0 0 36 816">
 <g fill="none" stroke="#e4e4e4" stroke-width="1.6" stroke-linejoin="round" stroke-linecap="round">
  <path d="M11 69c-3.5 0-5.2-2.5-5.2-5s2-4.8 4.6-4.8c.2-4.5 3.5-7.5 7.6-7.5s7.2 3 7.6 7c2.8.2 4.6 2.4 4.6 5s-2 5.3-5.2 5.3M18.2 58v15M18.2 65.5l-3.5-3M18.2 63l3.5-3M18.2 68.5l3.5-3"/>
  <path d="M11 113H5.5V93.5h23v6.5" stroke-width="1.3"/>
  <path d="M15.5 106v-3.5h3.5M27 102.5h3.5V106M30.5 114.5V118H27M19 118h-3.5v-3.5" stroke-width="1.3"/>
  <path d="M5 149.8h25.8v8.4H5zM5 160.5h25.8" stroke-width="1.3"/>
  <path d="M8.5 158v-2.5M11.5 158v-2M14.5 158v-3M17.5 158v-2M20.5 158v-3M23.5 158v-2M26.5 158v-2.5" stroke-width="1"/>
  <path d="M4.4 201.6l8.4-6.4h18.7l-8.3 6.4z" stroke-width="1.3"/>
  <path d="M6.5 234.5l4.5-3.5h18.5v19l-4.5 3.5H6.5zM6.5 234.5h18.5l4.5-3.5M25 234.5v19" stroke-width="1.2"/>
  <path d="M9 278.5l2.5-2.5h19.5v20.5H5V282z" stroke-width="1.3"/>
  <path d="M5 285h26M18 276v20.5" stroke-width="1" stroke-dasharray="2 1.5"/>
  <circle cx="17.7" cy="331" r="7.5"/>
  <path d="M17.7 321.5v2M17.7 338.5v2M8.2 331h2M25.2 331h2" stroke-width="2"/>
  <circle cx="17.7" cy="375.2" r="12.5" stroke-width="1.2"/>
  <path d="M12.5 384v-15c2.5-1.5 4.5-1.5 6.5 0s4.5 1.5 6.5 0v8.5c-2 1.5-4.5 1.5-6.5 0s-4-1.5-6.5 0" stroke-width="1.2"/>
  <path d="M3.3 437.5L33 422.5M12 441.5l20-10M5 426.5l20 9.5M13 417.5l18 9" stroke-width="1"/>
 </g>
 <path d="M13 192.8l9.7-7.7v14.3H13zM13 202.2h9.7v2.5L13 212.9z" fill="#dedede"/>
 <path d="M17 231.5h5v21.5h-5z" fill="#d0d0d0"/>
 <circle cx="17.7" cy="331" r="4" fill="#e4e4e4"/>
 <path d="M4.5 302.5h26" stroke="#e4e4e4" stroke-width="1"/>
 <path d="M23.5 295.5h7v-4h-7z" fill="#e4e4e4"/>
 <text x="5" y="432" font-family="Liberation Sans" font-size="5.5" fill="#e4e4e4">1</text>
 <text x="14" y="414" font-family="Liberation Sans" font-size="5.5" fill="#e4e4e4">2</text>
 <g fill="none" stroke="#e4e4e4" stroke-width="1.2" stroke-dasharray="2 1.6">
  <rect x="6.2" y="461.6" width="23.6" height="23"/>
  <rect x="6.2" y="505.7" width="23.6" height="22.5"/>
  <rect x="6.2" y="549.2" width="23.6" height="23.2"/>
  <path d="M15.9 616.6H6.2v-23.1h23.6v9.5"/>
 </g>
 <path d="M13.5 469l4.5-2.5 4.5 2.5v6l-4.5 2.5-4.5-2.5zM13.5 469l4.5 2.5 4.5-2.5M18 471.5v6" fill="none" stroke="#e4e4e4" stroke-width="1.1"/>
 <path d="M10.5 517c2-3.5 4.5-5 7.5-5s5.5 1.5 7.5 5c-2 3.5-4.5 5-7.5 5s-5.5-1.5-7.5-5z" fill="#e4e4e4"/><circle cx="18" cy="517" r="2.6" fill="#555"/><circle cx="18" cy="517" r="1.3" fill="#e4e4e4"/>
 <path d="M10.5 561c2-3.5 4.5-5 7.5-5s5.5 1.5 7.5 5c-2 3.5-4.5 5-7.5 5s-5.5-1.5-7.5-5z" fill="#e4e4e4"/><circle cx="18" cy="561" r="2.4" fill="#555"/><path d="M11 554l13 13" stroke="#555" stroke-width="2.2"/><path d="M11 554l13 13" stroke="#e4e4e4" stroke-width="0.9"/>
 <path d="M22.7 104l4 2.3v4.6l-4 2.3-4-2.3v-4.6z" fill="#e4e4e4"/>
 <rect x="15.9" y="603" width="16" height="15.8" fill="#e4e4e4"/><path d="M20 607l8 8M28 607l-8 8" stroke="#555" stroke-width="1.5"/>
 <path d="M6.2 647.2l7-4.7 16 1.5-6.7 4.2z" fill="#d4d4d4"/><path d="M6.2 647.2l16.3 1v12.3H10.5c-2.8-3.5-4.3-8-4.3-13.3z" fill="#eeeeee"/><path d="M22.5 648.2l6.7-4.2v11.5l-6.7 5z" fill="#a4a4a4"/>
 <g fill="none" stroke="#ececec" stroke-width="1.8"><ellipse cx="17.7" cy="698" rx="11" ry="5.8"/><ellipse cx="17.7" cy="698" rx="5.2" ry="10.5"/></g>
 <path d="M17.7 698v-4M17.7 698l-3 3M17.7 698l3 3" stroke="#ececec" stroke-width="1"/>
 <path d="M2 809v-4l4 4z" fill="#e0e0e0"/>
</svg>

</body></html>
